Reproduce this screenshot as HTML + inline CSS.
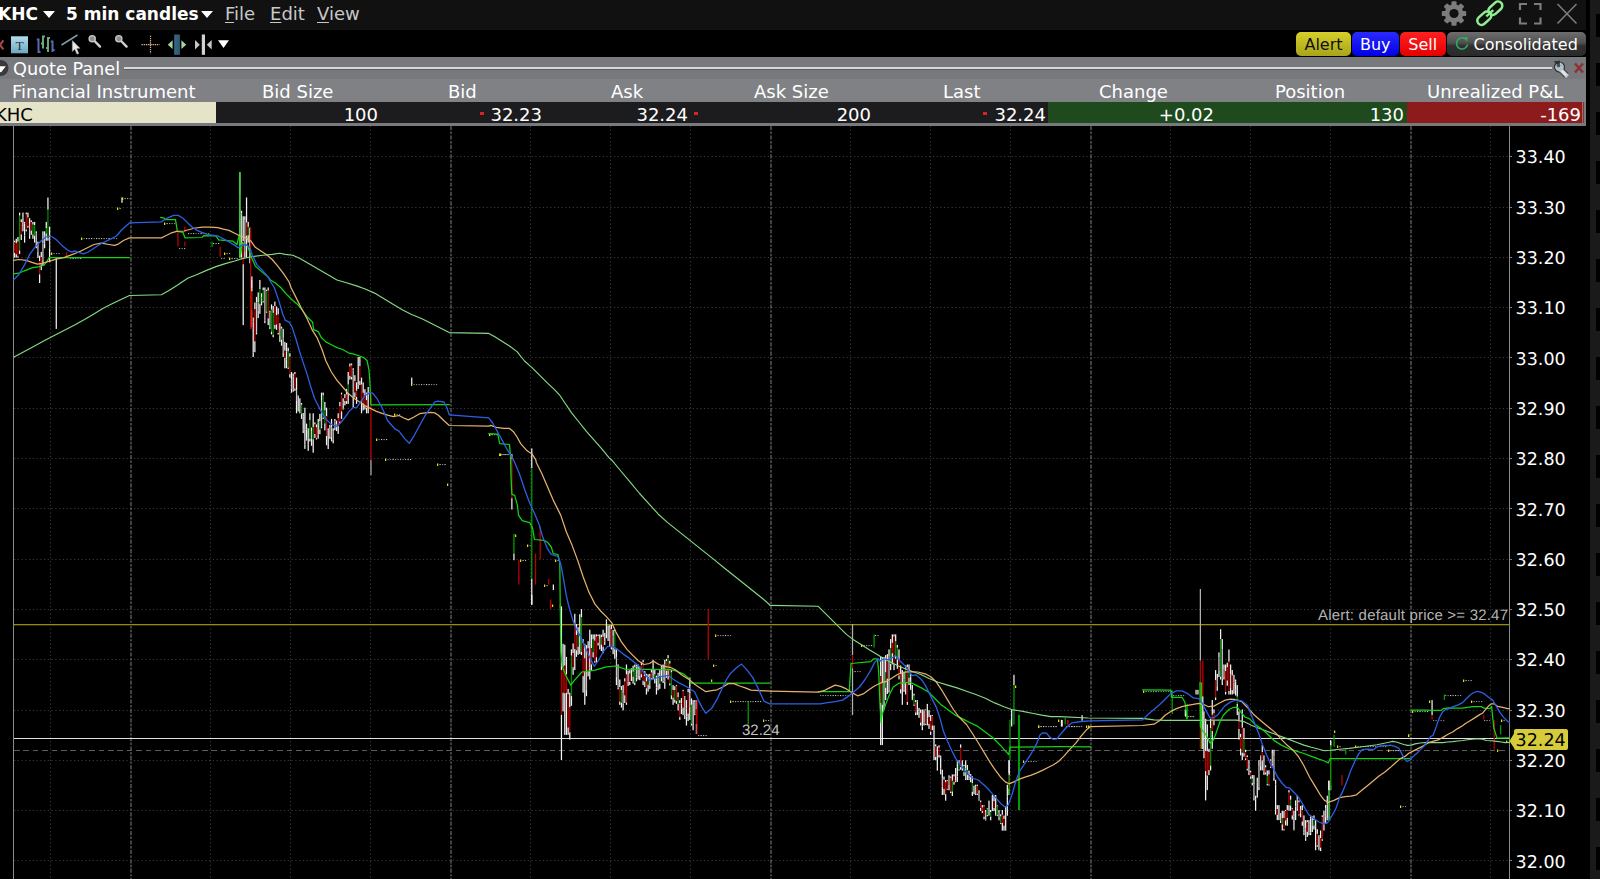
<!DOCTYPE html>
<html lang="en">
<head>
<meta charset="utf-8">
<title>KHC 5 min candles</title>
<style>
html,body{margin:0;padding:0;background:#000;}
body{width:1600px;height:879px;overflow:hidden;position:relative;font-family:"DejaVu Sans","Liberation Sans",sans-serif;color:#fff;}
.abs{position:absolute;}
#titlebar{left:0;top:0;width:1586px;height:30px;background:#111111;}
#toolbar{left:0;top:30px;width:1586px;height:27px;background:#000;}
#rightstrip{left:1590px;top:0;width:10px;height:879px;background:#1a1a1a;}
#rightstrip2{left:1596px;top:0;width:4px;height:879px;background:repeating-linear-gradient(to bottom,#1a1a1a 0,#1a1a1a 13.6px,#000 13.6px,#000 37.4px,#1a1a1a 37.4px,#1a1a1a 49px);}
.t1{font-weight:bold;font-size:17px;line-height:30px;top:-1px;white-space:nowrap;color:#fff;}
.menu{font-size:18px;line-height:30px;top:-1px;white-space:nowrap;color:#c8c8c8;}
.menu u{text-decoration-thickness:1px;text-underline-offset:2px;}
.tri{width:0;height:0;border-left:6px solid transparent;border-right:6px solid transparent;border-top:7px solid #fff;}
#qp{left:0;top:57px;width:1586px;height:22px;background:#77797d;}
#qh{left:0;top:79px;width:1586px;height:23px;background:#808185;}
#qr{left:0;top:102px;width:1586px;height:21px;background:#1c1c1e;}
#qb{left:0;top:123px;width:1586px;height:3px;background:#77797d;}
.ql{font-size:17.7px;line-height:22px;white-space:nowrap;color:#fff;}
.hd{font-size:18px;line-height:23px;top:80px;white-space:nowrap;color:#fff;}
.cell{font-size:18px;line-height:21px;top:104px;height:21px;white-space:nowrap;color:#fff;text-align:right;}
.btn{top:32px;height:23.5px;border-radius:5px;font-size:16px;line-height:25px;text-align:center;white-space:nowrap;}
.dot{width:4px;height:3px;background:#e02020;top:112px;}
.ax{font-size:17px;line-height:20px;left:1516px;color:#fff;white-space:nowrap;}
</style>
</head>
<body>
<div id="titlebar" class="abs"></div>
<div id="toolbar" class="abs"></div>
<div id="rightstrip" class="abs"></div>
<div id="rightstrip2" class="abs"></div>

<div class="abs t1" style="left:-2px;">KHC</div>
<div class="abs tri" style="left:43px;top:11px;"></div>
<div class="abs t1" style="left:66px;">5 min candles</div>
<div class="abs tri" style="left:201px;top:11px;"></div>
<div class="abs menu" style="left:225px;"><u>F</u>ile</div>
<div class="abs menu" style="left:270px;"><u>E</u>dit</div>
<div class="abs menu" style="left:317px;"><u>V</u>iew</div>


<div class="abs btn" style="left:1296px;width:55px;background:linear-gradient(#d6d02c,#a9a418);color:#111;">Alert</div>
<div class="abs btn" style="left:1352px;width:46.5px;background:linear-gradient(#2a2aff,#0000e6);color:#fff;">Buy</div>
<div class="abs btn" style="left:1399.5px;width:46.5px;background:linear-gradient(#ff2020,#e60000);color:#fff;">Sell</div>
<div class="abs btn" style="left:1446.5px;width:139.5px;background:linear-gradient(#6e6e6e 0%,#505050 45%,#303030 58%,#2a2a2a 100%);color:#fff;text-align:left;"><span style="margin-left:27px;">Consolidated</span></div>

<div id="qp" class="abs"></div>
<div id="qh" class="abs"></div>
<div id="qr" class="abs"></div>
<div id="qb" class="abs"></div>
<div class="abs" style="left:124px;top:67px;width:1428px;height:2px;background:#d8d8d8;border-bottom:1px solid #5c5d60;"></div>
<div class="abs ql" style="left:13px;top:58px;">Quote Panel</div>

<div class="abs hd" style="left:12px;">Financial Instrument</div>
<div class="abs hd" style="left:262px;">Bid Size</div>
<div class="abs hd" style="left:448px;">Bid</div>
<div class="abs hd" style="left:611px;">Ask</div>
<div class="abs hd" style="left:754px;">Ask Size</div>
<div class="abs hd" style="left:943px;">Last</div>
<div class="abs hd" style="left:1099px;">Change</div>
<div class="abs hd" style="left:1275px;">Position</div>
<div class="abs hd" style="left:1427px;">Unrealized P&amp;L</div>

<div class="abs" style="left:0;top:102px;width:216px;height:21px;background:#e6e4c8;"></div>
<div class="abs cell" style="left:-5px;color:#000;text-align:left;">KHC</div>
<div class="abs cell" style="left:216px;width:162px;">100</div>
<div class="abs cell" style="left:380px;width:162px;">32.23</div>
<div class="abs dot" style="left:480px;"></div>
<div class="abs cell" style="left:545px;width:143px;">32.24</div>
<div class="abs dot" style="left:694px;"></div>
<div class="abs cell" style="left:710px;width:161px;">200</div>
<div class="abs cell" style="left:880px;width:166px;">32.24</div>
<div class="abs dot" style="left:983px;"></div>
<div class="abs" style="left:1048px;top:102px;width:359px;height:21px;background:#1e4a1e;"></div>
<div class="abs cell" style="left:1048px;width:166px;">+0.02</div>
<div class="abs cell" style="left:1240px;width:164px;">130</div>
<div class="abs" style="left:1407px;top:102px;width:175px;height:21px;background:#8e1b1b;"></div><div class="abs" style="left:1582px;top:102px;width:4px;height:21px;background:#77797d;"></div><div class="abs" style="left:1583px;top:102px;width:1px;height:21px;background:#a02828;"></div>
<div class="abs cell" style="left:1407px;width:174px;">-169</div>

<svg class="abs" style="left:0;top:0;" width="1590" height="80" viewBox="0 0 1590 80">
<defs>
<linearGradient id="gT" x1="0" y1="0" x2="0" y2="1"><stop offset="0" stop-color="#b4dcea"/><stop offset="1" stop-color="#6aa9c2"/></linearGradient>
<linearGradient id="gB" x1="0" y1="0" x2="1" y2="0"><stop offset="0" stop-color="#386a88"/><stop offset="1" stop-color="#2a5570"/></linearGradient>
</defs>
<!-- red x fragment -->
<path d="M3.4 40.4 L0 44.8 L3.4 49.4" stroke="#a04848" stroke-width="2.2" fill="none"/>
<!-- T box -->
<rect x="11" y="36.3" width="17" height="17" fill="url(#gT)"/>
<text x="19.6" y="49.8" text-anchor="middle" font-family="Liberation Serif, serif" font-size="13.5" fill="#333">T</text>
<!-- bars -->
<g stroke-width="2" fill="none">
<path d="M38.5 38.5 V53 M36.8 39.5 H38.5 M38.5 52 H40.5" stroke="#5a68b0"/>
<path d="M43 35.5 V48.5 M43 36.5 H45 M41 43.5 H43" stroke="#6aa878"/>
<path d="M48 37 V52 M48 38 H50 M46 48 H48" stroke="#6aa878"/>
<path d="M52.5 40.5 V52 M50.7 41.5 H52.5 M52.5 50 H54.7" stroke="#5a68b0"/>
</g>
<!-- line + cursor -->
<path d="M61.5 45 L77.5 35" stroke="#7f98ab" stroke-width="1.5"/>
<path d="M72.3 40.5 L72.3 51.5 L74.8 49.3 L77 54.2 L78.8 53.4 L76.7 48.6 L80 48.3 Z" fill="#e8e8e8" stroke="#999" stroke-width="0.5"/>
<!-- magnifiers -->
<g>
<path d="M95 41.5 L100 46.6" stroke="#d0d0d0" stroke-width="2.4" stroke-linecap="round"/>
<circle cx="92.2" cy="38.8" r="3.1" fill="#8e8e8e" stroke="#c8c8c8" stroke-width="1.3"/>
<path d="M121.6 41.5 L126.6 46.6" stroke="#d0d0d0" stroke-width="2.4" stroke-linecap="round"/>
<circle cx="118.8" cy="38.8" r="3.1" fill="#8e8e8e" stroke="#c8c8c8" stroke-width="1.3"/>
</g>
<!-- crosshair -->
<path d="M141.5 44.7 H159.5 M150.5 35.7 V53.6" stroke="#d8b090" stroke-width="1.2" stroke-dasharray="1.4 0.8" fill="none"/>
<!-- blue bar with green arrows -->
<rect x="174.2" y="34.5" width="5.8" height="20.3" fill="url(#gB)"/>
<path d="M167.8 44.7 L172.6 40.3 V49.1 Z M186.2 44.7 L181.4 40.3 V49.1 Z" fill="#a4d4a4"/>
<!-- split -->
<rect x="201.8" y="34.5" width="3.2" height="20.3" fill="#d2d2d2"/>
<path d="M199.8 44.7 L195 40 V49.4 Z M206.8 44.7 L211.7 40 V49.4 Z" fill="#c8c8c8"/>
<path d="M218 40.2 H229 L223.5 48 Z" fill="#fff"/>
<!-- gear -->
<g transform="translate(1454 13.5)">
<g fill="#7c7c7c">
<circle r="9.3"/>
<rect x="-2.6" y="-12.2" width="5.2" height="24.4" rx="1.2"/>
<rect x="-2.6" y="-12.2" width="5.2" height="24.4" rx="1.2" transform="rotate(45)"/>
<rect x="-2.6" y="-12.2" width="5.2" height="24.4" rx="1.2" transform="rotate(90)"/>
<rect x="-2.6" y="-12.2" width="5.2" height="24.4" rx="1.2" transform="rotate(135)"/>
</g>
<circle r="4.6" fill="#111"/>
</g>
<!-- link -->
<g fill="none" stroke="#90ee90" stroke-width="2.7" transform="translate(1489.8 13.2) rotate(-42) scale(0.93)">
<rect x="-16.5" y="-4.6" width="17" height="9.2" rx="4.6"/>
<rect x="-0.5" y="-4.6" width="17" height="9.2" rx="4.6"/>
<path d="M-5 0 H5" stroke-width="2.6"/>
</g>
<!-- fullscreen -->
<path d="M1520 10 V4 H1527 M1534 4 H1540.5 V10 M1540.5 17.5 V23.5 H1534 M1527 23.5 H1520 V17.5" stroke="#7c7c7c" stroke-width="2.2" fill="none"/>
<!-- close -->
<path d="M1557.5 4 L1576.5 23.5 M1576.5 4 L1557.5 23.5" stroke="#7c7c7c" stroke-width="1.6" fill="none"/>
<!-- refresh icon in Consolidated -->
<path d="M1466.5 40 A5.6 5.6 0 1 0 1467.6 44.5" stroke="#2fae62" stroke-width="1.5" fill="none"/>
<path d="M1463.2 37.2 L1467.8 37.2 L1467.2 41.8 Z" fill="#2fae62"/>
<!-- quote panel collapse icon -->
<circle cx="0.5" cy="68" r="8" fill="#3a3a3c"/>
<path d="M-4 66.2 H5.8 L1 72.6 Z" fill="#fff"/>
<!-- quote panel right icons -->
<g>
<path d="M1560 69 L1566.5 75.5" stroke="#2e3236" stroke-width="6" stroke-linecap="butt"/>
<circle cx="1559.5" cy="67" r="5.6" fill="#2e3236"/>
<path d="M1560 69 L1567.5 76.5" stroke="#c6d0d8" stroke-width="4" stroke-linecap="butt"/>
<circle cx="1559.5" cy="67" r="4.4" fill="#b4c0c8"/>
<path d="M1559.5 67 L1553.5 61.5 L1560 60.5 Z" fill="#2e3236"/>
<circle cx="1558.5" cy="65.6" r="1.8" fill="#4a5258"/>
<path d="M1561.5 70.5 L1566 75" stroke="#e6eef2" stroke-width="1.5"/>
</g>
<path d="M1575 63.5 L1583 72.5 M1583 63.5 L1575 72.5" stroke="#8c3232" stroke-width="2.6" fill="none"/>
</svg>

<svg class="abs" style="left:0;top:126px;" width="1590" height="753" viewBox="0 126 1590 753" shape-rendering="crispEdges">
<rect x="0" y="126" width="1590" height="753" fill="#000"/>
<line x1="14" x2="1509" y1="860.5" y2="860.5" stroke="#363636" stroke-width="1" stroke-dasharray="1.25 2.5" shape-rendering="auto"/>
<line x1="1510" x2="1512" y1="860.5" y2="860.5" stroke="#7a7a7a" stroke-width="1"/>
<line x1="14" x2="1509" y1="810.5" y2="810.5" stroke="#363636" stroke-width="1" stroke-dasharray="1.25 2.5" shape-rendering="auto"/>
<line x1="1510" x2="1512" y1="810.5" y2="810.5" stroke="#7a7a7a" stroke-width="1"/>
<line x1="14" x2="1509" y1="760.5" y2="760.5" stroke="#363636" stroke-width="1" stroke-dasharray="1.25 2.5" shape-rendering="auto"/>
<line x1="1510" x2="1512" y1="760.5" y2="760.5" stroke="#7a7a7a" stroke-width="1"/>
<line x1="14" x2="1509" y1="710.5" y2="710.5" stroke="#363636" stroke-width="1" stroke-dasharray="1.25 2.5" shape-rendering="auto"/>
<line x1="1510" x2="1512" y1="710.5" y2="710.5" stroke="#7a7a7a" stroke-width="1"/>
<line x1="14" x2="1509" y1="659.5" y2="659.5" stroke="#363636" stroke-width="1" stroke-dasharray="1.25 2.5" shape-rendering="auto"/>
<line x1="1510" x2="1512" y1="659.5" y2="659.5" stroke="#7a7a7a" stroke-width="1"/>
<line x1="14" x2="1509" y1="609.5" y2="609.5" stroke="#363636" stroke-width="1" stroke-dasharray="1.25 2.5" shape-rendering="auto"/>
<line x1="1510" x2="1512" y1="609.5" y2="609.5" stroke="#7a7a7a" stroke-width="1"/>
<line x1="14" x2="1509" y1="559.5" y2="559.5" stroke="#363636" stroke-width="1" stroke-dasharray="1.25 2.5" shape-rendering="auto"/>
<line x1="1510" x2="1512" y1="559.5" y2="559.5" stroke="#7a7a7a" stroke-width="1"/>
<line x1="14" x2="1509" y1="508.5" y2="508.5" stroke="#363636" stroke-width="1" stroke-dasharray="1.25 2.5" shape-rendering="auto"/>
<line x1="1510" x2="1512" y1="508.5" y2="508.5" stroke="#7a7a7a" stroke-width="1"/>
<line x1="14" x2="1509" y1="458.5" y2="458.5" stroke="#363636" stroke-width="1" stroke-dasharray="1.25 2.5" shape-rendering="auto"/>
<line x1="1510" x2="1512" y1="458.5" y2="458.5" stroke="#7a7a7a" stroke-width="1"/>
<line x1="14" x2="1509" y1="408.5" y2="408.5" stroke="#363636" stroke-width="1" stroke-dasharray="1.25 2.5" shape-rendering="auto"/>
<line x1="1510" x2="1512" y1="408.5" y2="408.5" stroke="#7a7a7a" stroke-width="1"/>
<line x1="14" x2="1509" y1="357.5" y2="357.5" stroke="#363636" stroke-width="1" stroke-dasharray="1.25 2.5" shape-rendering="auto"/>
<line x1="1510" x2="1512" y1="357.5" y2="357.5" stroke="#7a7a7a" stroke-width="1"/>
<line x1="14" x2="1509" y1="307.5" y2="307.5" stroke="#363636" stroke-width="1" stroke-dasharray="1.25 2.5" shape-rendering="auto"/>
<line x1="1510" x2="1512" y1="307.5" y2="307.5" stroke="#7a7a7a" stroke-width="1"/>
<line x1="14" x2="1509" y1="257.5" y2="257.5" stroke="#363636" stroke-width="1" stroke-dasharray="1.25 2.5" shape-rendering="auto"/>
<line x1="1510" x2="1512" y1="257.5" y2="257.5" stroke="#7a7a7a" stroke-width="1"/>
<line x1="14" x2="1509" y1="207.5" y2="207.5" stroke="#363636" stroke-width="1" stroke-dasharray="1.25 2.5" shape-rendering="auto"/>
<line x1="1510" x2="1512" y1="207.5" y2="207.5" stroke="#7a7a7a" stroke-width="1"/>
<line x1="14" x2="1509" y1="156.5" y2="156.5" stroke="#363636" stroke-width="1" stroke-dasharray="1.25 2.5" shape-rendering="auto"/>
<line x1="1510" x2="1512" y1="156.5" y2="156.5" stroke="#7a7a7a" stroke-width="1"/>
<line x1="50.5" x2="50.5" y1="126" y2="879" stroke="#363636" stroke-width="1" stroke-dasharray="1.25 2.5" shape-rendering="auto"/>
<line x1="131" x2="131" y1="126" y2="879" stroke="#5c5c5c" stroke-width="1.4" stroke-dasharray="4.2 1.4 2.4 1.4" shape-rendering="auto"/>
<line x1="210.5" x2="210.5" y1="126" y2="879" stroke="#363636" stroke-width="1" stroke-dasharray="1.25 2.5" shape-rendering="auto"/>
<line x1="290.5" x2="290.5" y1="126" y2="879" stroke="#363636" stroke-width="1" stroke-dasharray="1.25 2.5" shape-rendering="auto"/>
<line x1="370.5" x2="370.5" y1="126" y2="879" stroke="#363636" stroke-width="1" stroke-dasharray="1.25 2.5" shape-rendering="auto"/>
<line x1="451" x2="451" y1="126" y2="879" stroke="#5c5c5c" stroke-width="1.4" stroke-dasharray="4.2 1.4 2.4 1.4" shape-rendering="auto"/>
<line x1="530.5" x2="530.5" y1="126" y2="879" stroke="#363636" stroke-width="1" stroke-dasharray="1.25 2.5" shape-rendering="auto"/>
<line x1="610.5" x2="610.5" y1="126" y2="879" stroke="#363636" stroke-width="1" stroke-dasharray="1.25 2.5" shape-rendering="auto"/>
<line x1="690.5" x2="690.5" y1="126" y2="879" stroke="#363636" stroke-width="1" stroke-dasharray="1.25 2.5" shape-rendering="auto"/>
<line x1="771" x2="771" y1="126" y2="879" stroke="#5c5c5c" stroke-width="1.4" stroke-dasharray="4.2 1.4 2.4 1.4" shape-rendering="auto"/>
<line x1="850.5" x2="850.5" y1="126" y2="879" stroke="#363636" stroke-width="1" stroke-dasharray="1.25 2.5" shape-rendering="auto"/>
<line x1="930.5" x2="930.5" y1="126" y2="879" stroke="#363636" stroke-width="1" stroke-dasharray="1.25 2.5" shape-rendering="auto"/>
<line x1="1010.5" x2="1010.5" y1="126" y2="879" stroke="#363636" stroke-width="1" stroke-dasharray="1.25 2.5" shape-rendering="auto"/>
<line x1="1091" x2="1091" y1="126" y2="879" stroke="#5c5c5c" stroke-width="1.4" stroke-dasharray="4.2 1.4 2.4 1.4" shape-rendering="auto"/>
<line x1="1170.5" x2="1170.5" y1="126" y2="879" stroke="#363636" stroke-width="1" stroke-dasharray="1.25 2.5" shape-rendering="auto"/>
<line x1="1250.5" x2="1250.5" y1="126" y2="879" stroke="#363636" stroke-width="1" stroke-dasharray="1.25 2.5" shape-rendering="auto"/>
<line x1="1330.5" x2="1330.5" y1="126" y2="879" stroke="#363636" stroke-width="1" stroke-dasharray="1.25 2.5" shape-rendering="auto"/>
<line x1="1411" x2="1411" y1="126" y2="879" stroke="#5c5c5c" stroke-width="1.4" stroke-dasharray="4.2 1.4 2.4 1.4" shape-rendering="auto"/>
<line x1="1490.5" x2="1490.5" y1="126" y2="879" stroke="#363636" stroke-width="1" stroke-dasharray="1.25 2.5" shape-rendering="auto"/>
<line x1="13.5" x2="13.5" y1="126" y2="879" stroke="#8a8a8a" stroke-width="1"/>
<line x1="1509.5" x2="1509.5" y1="126" y2="879" stroke="#8a8a8a" stroke-width="1"/>
<line x1="14" x2="1509" y1="624.5" y2="624.5" stroke="#948c0a" stroke-width="1"/>
<line x1="14" x2="1509" y1="625.5" y2="625.5" stroke="#2c2a00" stroke-width="1"/>
<line x1="14" x2="1509" y1="738.5" y2="738.5" stroke="#e0e0e0" stroke-width="1"/>
<line x1="14" x2="1509" y1="750.5" y2="750.5" stroke="#5c5c5c" stroke-width="1" stroke-dasharray="5.6 3.8"/>
<g shape-rendering="auto">
<rect x="13.98" y="240.7" width="1.25" height="1.7" fill="#f2f2f2"/>
<rect x="13.98" y="242.5" width="1.25" height="10.5" fill="#b40000"/>
<rect x="13.98" y="252.9" width="1.25" height="4.7" fill="#f2f2f2"/>
<rect x="15.65" y="238.8" width="1.25" height="4.5" fill="#f2f2f2"/>
<rect x="15.65" y="243.3" width="1.25" height="11.0" fill="#b40000"/>
<rect x="15.65" y="254.3" width="1.25" height="3.3" fill="#f2f2f2"/>
<rect x="17.31" y="237.0" width="1.25" height="4.7" fill="#f2f2f2"/>
<rect x="17.31" y="241.7" width="1.25" height="14.6" fill="#b40000"/>
<rect x="17.31" y="256.3" width="1.25" height="1.3" fill="#f2f2f2"/>
<rect x="18.98" y="212.6" width="1.25" height="3.1" fill="#f2f2f2"/>
<rect x="18.98" y="215.6" width="1.25" height="34.8" fill="#008c00"/>
<rect x="18.98" y="250.5" width="1.25" height="3.4" fill="#f2f2f2"/>
<rect x="20.65" y="219.3" width="1.25" height="2.7" fill="#f2f2f2"/>
<rect x="20.65" y="221.9" width="1.25" height="12.5" fill="#b40000"/>
<rect x="20.65" y="234.4" width="1.25" height="5.6" fill="#f2f2f2"/>
<rect x="22.31" y="212.6" width="1.25" height="4.7" fill="#f2f2f2"/>
<rect x="22.31" y="217.3" width="1.25" height="10.5" fill="#f2f2f2"/>
<rect x="22.31" y="227.8" width="1.25" height="3.5" fill="#f2f2f2"/>
<rect x="23.98" y="221.9" width="1.25" height="1.4" fill="#f2f2f2"/>
<rect x="23.98" y="223.3" width="1.25" height="12.0" fill="#f2f2f2"/>
<rect x="23.98" y="235.4" width="1.25" height="7.2" fill="#f2f2f2"/>
<rect x="25.65" y="212.6" width="1.25" height="1.9" fill="#f2f2f2"/>
<rect x="25.65" y="214.4" width="1.25" height="15.2" fill="#b40000"/>
<rect x="25.65" y="229.6" width="1.25" height="1.7" fill="#f2f2f2"/>
<rect x="27.31" y="212.6" width="1.25" height="5.0" fill="#f2f2f2"/>
<rect x="27.31" y="217.6" width="1.25" height="8.3" fill="#b40000"/>
<rect x="27.31" y="225.9" width="1.25" height="1.7" fill="#f2f2f2"/>
<rect x="28.98" y="218.2" width="1.25" height="5.7" fill="#f2f2f2"/>
<rect x="28.98" y="223.8" width="1.25" height="11.3" fill="#cfc8c8"/>
<rect x="28.98" y="235.1" width="1.25" height="3.7" fill="#f2f2f2"/>
<rect x="30.65" y="220.3" width="1.25" height="1.8" fill="#f2f2f2"/>
<rect x="30.65" y="222.0" width="1.25" height="8.5" fill="#b40000"/>
<rect x="30.65" y="230.6" width="1.25" height="4.2" fill="#f2f2f2"/>
<rect x="32.31" y="221.9" width="1.25" height="2.7" fill="#f2f2f2"/>
<rect x="32.31" y="224.7" width="1.25" height="9.9" fill="#008c00"/>
<rect x="32.31" y="234.5" width="1.25" height="4.3" fill="#f2f2f2"/>
<rect x="33.98" y="221.9" width="1.25" height="3.2" fill="#f2f2f2"/>
<rect x="33.98" y="225.1" width="1.25" height="10.7" fill="#008c00"/>
<rect x="33.98" y="235.8" width="1.25" height="6.8" fill="#f2f2f2"/>
<rect x="35.65" y="231.3" width="1.25" height="2.3" fill="#f2f2f2"/>
<rect x="35.65" y="233.6" width="1.25" height="10.4" fill="#cfc8c8"/>
<rect x="35.65" y="244.0" width="1.25" height="4.2" fill="#f2f2f2"/>
<rect x="37.31" y="241.6" width="1.25" height="2.5" fill="#f2f2f2"/>
<rect x="37.31" y="244.0" width="1.25" height="7.4" fill="#cfc8c8"/>
<rect x="37.31" y="251.5" width="1.25" height="6.4" fill="#f2f2f2"/>
<rect x="38.98" y="255.7" width="1.25" height="5.3" fill="#f2f2f2"/>
<rect x="38.98" y="261.1" width="1.25" height="13.3" fill="#b40000"/>
<rect x="38.98" y="274.4" width="1.25" height="8.6" fill="#f2f2f2"/>
<rect x="40.65" y="251.9" width="1.25" height="5.2" fill="#f2f2f2"/>
<rect x="40.65" y="257.1" width="1.25" height="7.2" fill="#b40000"/>
<rect x="40.65" y="264.3" width="1.25" height="5.8" fill="#f2f2f2"/>
<rect x="42.31" y="231.3" width="1.25" height="12.0" fill="#f2f2f2"/>
<rect x="42.31" y="243.4" width="1.25" height="16.3" fill="#cfc8c8"/>
<rect x="42.31" y="259.7" width="1.25" height="5.4" fill="#f2f2f2"/>
<rect x="43.98" y="231.3" width="1.25" height="4.4" fill="#f2f2f2"/>
<rect x="43.98" y="235.7" width="1.25" height="8.3" fill="#cfc8c8"/>
<rect x="43.98" y="244.0" width="1.25" height="4.3" fill="#f2f2f2"/>
<rect x="45.65" y="221.9" width="1.25" height="6.5" fill="#f2f2f2"/>
<rect x="45.65" y="228.4" width="1.25" height="5.2" fill="#008c00"/>
<rect x="45.65" y="233.6" width="1.25" height="7.1" fill="#f2f2f2"/>
<rect x="47.31" y="197.5" width="1.25" height="12.2" fill="#f2f2f2"/>
<rect x="47.31" y="209.7" width="1.25" height="27.9" fill="#008c00"/>
<rect x="47.31" y="237.6" width="1.25" height="3.1" fill="#f2f2f2"/>
<rect x="48.98" y="226.6" width="1.25" height="9.9" fill="#f2f2f2"/>
<rect x="48.98" y="236.5" width="1.25" height="11.6" fill="#cfc8c8"/>
<rect x="48.98" y="248.1" width="1.25" height="14.2" fill="#f2f2f2"/>
<rect x="239.25" y="172.2" width="1.25" height="23.2" fill="#f2f2f2"/>
<rect x="239.25" y="195.4" width="1.25" height="23.7" fill="#cfc8c8"/>
<rect x="239.25" y="219.0" width="1.25" height="38.6" fill="#f2f2f2"/>
<rect x="240.91" y="210.7" width="1.25" height="2.7" fill="#f2f2f2"/>
<rect x="240.91" y="213.4" width="1.25" height="34.3" fill="#cfc8c8"/>
<rect x="240.91" y="247.7" width="1.25" height="9.9" fill="#f2f2f2"/>
<rect x="242.58" y="216.3" width="1.25" height="24.9" fill="#f2f2f2"/>
<rect x="242.58" y="241.2" width="1.25" height="23.0" fill="#b40000"/>
<rect x="242.58" y="264.3" width="1.25" height="60.8" fill="#f2f2f2"/>
<rect x="244.25" y="216.3" width="1.25" height="3.9" fill="#f2f2f2"/>
<rect x="244.25" y="220.3" width="1.25" height="31.7" fill="#cfc8c8"/>
<rect x="244.25" y="252.0" width="1.25" height="5.6" fill="#f2f2f2"/>
<rect x="245.91" y="197.5" width="1.25" height="25.1" fill="#f2f2f2"/>
<rect x="245.91" y="222.6" width="1.25" height="13.0" fill="#b40000"/>
<rect x="245.91" y="235.6" width="1.25" height="22.0" fill="#f2f2f2"/>
<rect x="247.58" y="221.9" width="1.25" height="5.0" fill="#f2f2f2"/>
<rect x="247.58" y="227.0" width="1.25" height="8.2" fill="#008c00"/>
<rect x="247.58" y="235.2" width="1.25" height="7.4" fill="#f2f2f2"/>
<rect x="249.25" y="227.6" width="1.25" height="12.6" fill="#f2f2f2"/>
<rect x="249.25" y="240.1" width="1.25" height="17.8" fill="#f2f2f2"/>
<rect x="249.25" y="258.0" width="1.25" height="5.3" fill="#f2f2f2"/>
<rect x="250.91" y="280.0" width="1.25" height="8.2" fill="#f2f2f2"/>
<rect x="250.91" y="288.2" width="1.25" height="21.8" fill="#008c00"/>
<rect x="250.91" y="310.1" width="1.25" height="16.9" fill="#f2f2f2"/>
<rect x="252.58" y="317.5" width="1.25" height="4.1" fill="#f2f2f2"/>
<rect x="252.58" y="321.6" width="1.25" height="31.0" fill="#f2f2f2"/>
<rect x="252.58" y="352.6" width="1.25" height="4.4" fill="#f2f2f2"/>
<rect x="254.25" y="302.5" width="1.25" height="6.6" fill="#f2f2f2"/>
<rect x="254.25" y="309.1" width="1.25" height="32.3" fill="#b40000"/>
<rect x="254.25" y="341.3" width="1.25" height="10.9" fill="#f2f2f2"/>
<rect x="255.91" y="296.9" width="1.25" height="5.3" fill="#f2f2f2"/>
<rect x="255.91" y="302.2" width="1.25" height="30.3" fill="#cfc8c8"/>
<rect x="255.91" y="332.5" width="1.25" height="1.9" fill="#f2f2f2"/>
<rect x="257.58" y="292.4" width="1.25" height="9.8" fill="#f2f2f2"/>
<rect x="257.58" y="302.3" width="1.25" height="8.3" fill="#cfc8c8"/>
<rect x="257.58" y="310.6" width="1.25" height="7.5" fill="#f2f2f2"/>
<rect x="259.25" y="280.0" width="1.25" height="9.0" fill="#f2f2f2"/>
<rect x="259.25" y="289.0" width="1.25" height="15.1" fill="#008c00"/>
<rect x="259.25" y="304.1" width="1.25" height="9.7" fill="#f2f2f2"/>
<rect x="260.91" y="293.2" width="1.25" height="4.3" fill="#f2f2f2"/>
<rect x="260.91" y="297.5" width="1.25" height="3.8" fill="#cfc8c8"/>
<rect x="260.91" y="301.4" width="1.25" height="4.0" fill="#f2f2f2"/>
<rect x="262.58" y="287.5" width="1.25" height="2.8" fill="#f2f2f2"/>
<rect x="262.58" y="290.4" width="1.25" height="10.9" fill="#008c00"/>
<rect x="262.58" y="301.2" width="1.25" height="1.3" fill="#f2f2f2"/>
<rect x="264.25" y="287.5" width="1.25" height="2.6" fill="#f2f2f2"/>
<rect x="264.25" y="290.1" width="1.25" height="30.5" fill="#cfc8c8"/>
<rect x="264.25" y="320.6" width="1.25" height="2.6" fill="#f2f2f2"/>
<rect x="265.91" y="289.7" width="1.25" height="1.6" fill="#f2f2f2"/>
<rect x="265.91" y="291.3" width="1.25" height="20.4" fill="#008c00"/>
<rect x="265.91" y="311.6" width="1.25" height="1.2" fill="#f2f2f2"/>
<rect x="267.58" y="287.5" width="1.25" height="3.2" fill="#f2f2f2"/>
<rect x="267.58" y="290.7" width="1.25" height="27.7" fill="#b40000"/>
<rect x="267.58" y="318.4" width="1.25" height="6.7" fill="#f2f2f2"/>
<rect x="269.25" y="310.7" width="1.25" height="1.9" fill="#f2f2f2"/>
<rect x="269.25" y="312.6" width="1.25" height="14.0" fill="#cfc8c8"/>
<rect x="269.25" y="326.6" width="1.25" height="2.5" fill="#f2f2f2"/>
<rect x="270.91" y="304.4" width="1.25" height="5.3" fill="#f2f2f2"/>
<rect x="270.91" y="309.7" width="1.25" height="21.9" fill="#008c00"/>
<rect x="270.91" y="331.6" width="1.25" height="2.8" fill="#f2f2f2"/>
<rect x="272.58" y="306.0" width="1.25" height="6.9" fill="#f2f2f2"/>
<rect x="272.58" y="312.9" width="1.25" height="21.9" fill="#008c00"/>
<rect x="272.58" y="334.8" width="1.25" height="2.5" fill="#f2f2f2"/>
<rect x="274.25" y="301.6" width="1.25" height="4.6" fill="#f2f2f2"/>
<rect x="274.25" y="306.2" width="1.25" height="18.7" fill="#b40000"/>
<rect x="274.25" y="324.9" width="1.25" height="3.9" fill="#f2f2f2"/>
<rect x="275.91" y="306.4" width="1.25" height="9.0" fill="#f2f2f2"/>
<rect x="275.91" y="315.4" width="1.25" height="9.0" fill="#b40000"/>
<rect x="275.91" y="324.4" width="1.25" height="5.5" fill="#f2f2f2"/>
<rect x="277.58" y="308.2" width="1.25" height="6.3" fill="#f2f2f2"/>
<rect x="277.58" y="314.5" width="1.25" height="18.4" fill="#b40000"/>
<rect x="277.58" y="332.9" width="1.25" height="1.6" fill="#f2f2f2"/>
<rect x="279.25" y="323.2" width="1.25" height="7.4" fill="#f2f2f2"/>
<rect x="279.25" y="330.5" width="1.25" height="4.8" fill="#cfc8c8"/>
<rect x="279.25" y="335.3" width="1.25" height="6.6" fill="#f2f2f2"/>
<rect x="280.91" y="326.7" width="1.25" height="2.1" fill="#f2f2f2"/>
<rect x="280.91" y="328.7" width="1.25" height="10.8" fill="#008c00"/>
<rect x="280.91" y="339.6" width="1.25" height="6.1" fill="#f2f2f2"/>
<rect x="282.58" y="328.8" width="1.25" height="9.1" fill="#f2f2f2"/>
<rect x="282.58" y="337.9" width="1.25" height="14.4" fill="#cfc8c8"/>
<rect x="282.58" y="352.3" width="1.25" height="4.7" fill="#f2f2f2"/>
<rect x="284.25" y="341.9" width="1.25" height="8.8" fill="#f2f2f2"/>
<rect x="284.25" y="350.7" width="1.25" height="7.1" fill="#b40000"/>
<rect x="284.25" y="357.9" width="1.25" height="10.4" fill="#f2f2f2"/>
<rect x="285.91" y="342.9" width="1.25" height="8.4" fill="#f2f2f2"/>
<rect x="285.91" y="351.3" width="1.25" height="8.4" fill="#f2f2f2"/>
<rect x="285.91" y="359.7" width="1.25" height="8.5" fill="#f2f2f2"/>
<rect x="287.58" y="347.8" width="1.25" height="3.7" fill="#f2f2f2"/>
<rect x="287.58" y="351.5" width="1.25" height="16.2" fill="#008c00"/>
<rect x="287.58" y="367.6" width="1.25" height="1.3" fill="#f2f2f2"/>
<rect x="289.25" y="353.2" width="1.25" height="3.6" fill="#f2f2f2"/>
<rect x="289.25" y="356.8" width="1.25" height="17.4" fill="#b40000"/>
<rect x="289.25" y="374.2" width="1.25" height="3.4" fill="#f2f2f2"/>
<rect x="290.91" y="372.0" width="1.25" height="7.9" fill="#f2f2f2"/>
<rect x="290.91" y="379.9" width="1.25" height="8.4" fill="#cfc8c8"/>
<rect x="290.91" y="388.4" width="1.25" height="4.3" fill="#f2f2f2"/>
<rect x="292.58" y="373.5" width="1.25" height="3.2" fill="#f2f2f2"/>
<rect x="292.58" y="376.7" width="1.25" height="12.7" fill="#f2f2f2"/>
<rect x="292.58" y="389.4" width="1.25" height="2.3" fill="#f2f2f2"/>
<rect x="294.25" y="372.0" width="1.25" height="2.2" fill="#f2f2f2"/>
<rect x="294.25" y="374.2" width="1.25" height="14.3" fill="#b40000"/>
<rect x="294.25" y="388.5" width="1.25" height="2.3" fill="#f2f2f2"/>
<rect x="295.91" y="377.6" width="1.25" height="13.0" fill="#f2f2f2"/>
<rect x="295.91" y="390.6" width="1.25" height="10.4" fill="#cfc8c8"/>
<rect x="295.91" y="401.0" width="1.25" height="12.3" fill="#f2f2f2"/>
<rect x="297.58" y="395.5" width="1.25" height="1.3" fill="#f2f2f2"/>
<rect x="297.58" y="396.7" width="1.25" height="10.2" fill="#f2f2f2"/>
<rect x="297.58" y="406.9" width="1.25" height="4.5" fill="#f2f2f2"/>
<rect x="299.25" y="398.3" width="1.25" height="4.9" fill="#f2f2f2"/>
<rect x="299.25" y="403.1" width="1.25" height="5.5" fill="#f2f2f2"/>
<rect x="299.25" y="408.6" width="1.25" height="4.7" fill="#f2f2f2"/>
<rect x="300.91" y="403.0" width="1.25" height="1.8" fill="#f2f2f2"/>
<rect x="300.91" y="404.8" width="1.25" height="9.0" fill="#008c00"/>
<rect x="300.91" y="413.7" width="1.25" height="5.2" fill="#f2f2f2"/>
<rect x="302.58" y="413.0" width="1.25" height="3.8" fill="#f2f2f2"/>
<rect x="302.58" y="416.8" width="1.25" height="12.5" fill="#f2f2f2"/>
<rect x="302.58" y="429.3" width="1.25" height="3.8" fill="#f2f2f2"/>
<rect x="304.25" y="407.7" width="1.25" height="12.5" fill="#f2f2f2"/>
<rect x="304.25" y="420.2" width="1.25" height="24.2" fill="#f2f2f2"/>
<rect x="304.25" y="444.4" width="1.25" height="4.5" fill="#f2f2f2"/>
<rect x="305.91" y="423.6" width="1.25" height="5.7" fill="#f2f2f2"/>
<rect x="305.91" y="429.3" width="1.25" height="9.6" fill="#f2f2f2"/>
<rect x="305.91" y="438.9" width="1.25" height="1.7" fill="#f2f2f2"/>
<rect x="307.58" y="428.3" width="1.25" height="8.9" fill="#f2f2f2"/>
<rect x="307.58" y="437.2" width="1.25" height="7.4" fill="#f2f2f2"/>
<rect x="307.58" y="444.5" width="1.25" height="6.3" fill="#f2f2f2"/>
<rect x="309.25" y="413.3" width="1.25" height="6.8" fill="#f2f2f2"/>
<rect x="309.25" y="420.1" width="1.25" height="18.6" fill="#008c00"/>
<rect x="309.25" y="438.7" width="1.25" height="2.7" fill="#f2f2f2"/>
<rect x="310.91" y="427.5" width="1.25" height="4.3" fill="#f2f2f2"/>
<rect x="310.91" y="431.8" width="1.25" height="7.1" fill="#cfc8c8"/>
<rect x="310.91" y="438.9" width="1.25" height="6.9" fill="#f2f2f2"/>
<rect x="312.58" y="413.3" width="1.25" height="14.0" fill="#f2f2f2"/>
<rect x="312.58" y="427.3" width="1.25" height="12.1" fill="#008c00"/>
<rect x="312.58" y="439.3" width="1.25" height="13.4" fill="#f2f2f2"/>
<rect x="314.25" y="422.4" width="1.25" height="2.1" fill="#f2f2f2"/>
<rect x="314.25" y="424.5" width="1.25" height="9.5" fill="#b40000"/>
<rect x="314.25" y="434.0" width="1.25" height="4.0" fill="#f2f2f2"/>
<rect x="315.91" y="424.5" width="1.25" height="3.0" fill="#f2f2f2"/>
<rect x="315.91" y="427.5" width="1.25" height="10.6" fill="#b40000"/>
<rect x="315.91" y="438.1" width="1.25" height="1.4" fill="#f2f2f2"/>
<rect x="317.58" y="418.9" width="1.25" height="3.4" fill="#f2f2f2"/>
<rect x="317.58" y="422.3" width="1.25" height="12.1" fill="#f2f2f2"/>
<rect x="317.58" y="434.5" width="1.25" height="4.1" fill="#f2f2f2"/>
<rect x="319.25" y="413.9" width="1.25" height="7.5" fill="#f2f2f2"/>
<rect x="319.25" y="421.4" width="1.25" height="8.2" fill="#008c00"/>
<rect x="319.25" y="429.6" width="1.25" height="4.6" fill="#f2f2f2"/>
<rect x="320.92" y="392.6" width="1.25" height="8.3" fill="#f2f2f2"/>
<rect x="320.92" y="401.0" width="1.25" height="25.3" fill="#cfc8c8"/>
<rect x="320.92" y="426.3" width="1.25" height="2.0" fill="#f2f2f2"/>
<rect x="322.58" y="392.6" width="1.25" height="3.0" fill="#f2f2f2"/>
<rect x="322.58" y="395.6" width="1.25" height="21.9" fill="#008c00"/>
<rect x="322.58" y="417.6" width="1.25" height="1.4" fill="#f2f2f2"/>
<rect x="324.25" y="401.9" width="1.25" height="8.6" fill="#f2f2f2"/>
<rect x="324.25" y="410.6" width="1.25" height="12.8" fill="#008c00"/>
<rect x="324.25" y="423.4" width="1.25" height="7.0" fill="#f2f2f2"/>
<rect x="325.92" y="407.7" width="1.25" height="8.7" fill="#f2f2f2"/>
<rect x="325.92" y="416.3" width="1.25" height="19.7" fill="#b40000"/>
<rect x="325.92" y="436.0" width="1.25" height="9.2" fill="#f2f2f2"/>
<rect x="327.58" y="428.3" width="1.25" height="1.8" fill="#f2f2f2"/>
<rect x="327.58" y="430.1" width="1.25" height="13.8" fill="#f2f2f2"/>
<rect x="327.58" y="443.9" width="1.25" height="5.1" fill="#f2f2f2"/>
<rect x="329.25" y="424.8" width="1.25" height="3.2" fill="#f2f2f2"/>
<rect x="329.25" y="428.0" width="1.25" height="7.4" fill="#cfc8c8"/>
<rect x="329.25" y="435.4" width="1.25" height="3.5" fill="#f2f2f2"/>
<rect x="330.92" y="418.9" width="1.25" height="8.3" fill="#f2f2f2"/>
<rect x="330.92" y="427.2" width="1.25" height="9.6" fill="#cfc8c8"/>
<rect x="330.92" y="436.8" width="1.25" height="4.6" fill="#f2f2f2"/>
<rect x="332.58" y="428.3" width="1.25" height="3.4" fill="#f2f2f2"/>
<rect x="332.58" y="431.7" width="1.25" height="8.2" fill="#cfc8c8"/>
<rect x="332.58" y="439.9" width="1.25" height="3.4" fill="#f2f2f2"/>
<rect x="334.25" y="418.9" width="1.25" height="2.3" fill="#f2f2f2"/>
<rect x="334.25" y="421.3" width="1.25" height="6.3" fill="#cfc8c8"/>
<rect x="334.25" y="427.5" width="1.25" height="2.7" fill="#f2f2f2"/>
<rect x="335.92" y="420.6" width="1.25" height="3.7" fill="#f2f2f2"/>
<rect x="335.92" y="424.4" width="1.25" height="2.8" fill="#cfc8c8"/>
<rect x="335.92" y="427.1" width="1.25" height="4.0" fill="#f2f2f2"/>
<rect x="337.58" y="413.3" width="1.25" height="5.1" fill="#f2f2f2"/>
<rect x="337.58" y="418.4" width="1.25" height="7.7" fill="#b40000"/>
<rect x="337.58" y="426.1" width="1.25" height="7.8" fill="#f2f2f2"/>
<rect x="339.25" y="402.0" width="1.25" height="4.3" fill="#f2f2f2"/>
<rect x="339.25" y="406.4" width="1.25" height="15.2" fill="#b40000"/>
<rect x="339.25" y="421.6" width="1.25" height="1.6" fill="#f2f2f2"/>
<rect x="340.92" y="392.6" width="1.25" height="2.0" fill="#f2f2f2"/>
<rect x="340.92" y="394.6" width="1.25" height="16.8" fill="#b40000"/>
<rect x="340.92" y="411.4" width="1.25" height="7.5" fill="#f2f2f2"/>
<rect x="342.58" y="398.3" width="1.25" height="4.1" fill="#f2f2f2"/>
<rect x="342.58" y="402.4" width="1.25" height="6.0" fill="#f2f2f2"/>
<rect x="342.58" y="408.4" width="1.25" height="1.2" fill="#f2f2f2"/>
<rect x="344.25" y="394.1" width="1.25" height="4.1" fill="#f2f2f2"/>
<rect x="344.25" y="398.2" width="1.25" height="2.9" fill="#b40000"/>
<rect x="344.25" y="401.0" width="1.25" height="4.4" fill="#f2f2f2"/>
<rect x="345.92" y="388.9" width="1.25" height="5.8" fill="#f2f2f2"/>
<rect x="345.92" y="394.6" width="1.25" height="6.4" fill="#b40000"/>
<rect x="345.92" y="401.1" width="1.25" height="2.8" fill="#f2f2f2"/>
<rect x="347.58" y="372.0" width="1.25" height="12.7" fill="#f2f2f2"/>
<rect x="347.58" y="384.6" width="1.25" height="8.4" fill="#008c00"/>
<rect x="347.58" y="393.0" width="1.25" height="10.9" fill="#f2f2f2"/>
<rect x="349.25" y="363.5" width="1.25" height="3.2" fill="#f2f2f2"/>
<rect x="349.25" y="366.7" width="1.25" height="9.1" fill="#b40000"/>
<rect x="349.25" y="375.8" width="1.25" height="3.7" fill="#f2f2f2"/>
<rect x="350.92" y="363.5" width="1.25" height="1.9" fill="#f2f2f2"/>
<rect x="350.92" y="365.4" width="1.25" height="11.5" fill="#b40000"/>
<rect x="350.92" y="376.9" width="1.25" height="2.6" fill="#f2f2f2"/>
<rect x="352.58" y="368.2" width="1.25" height="2.2" fill="#f2f2f2"/>
<rect x="352.58" y="370.5" width="1.25" height="27.6" fill="#cfc8c8"/>
<rect x="352.58" y="398.0" width="1.25" height="9.6" fill="#f2f2f2"/>
<rect x="354.25" y="375.2" width="1.25" height="6.0" fill="#f2f2f2"/>
<rect x="354.25" y="381.2" width="1.25" height="11.3" fill="#b40000"/>
<rect x="354.25" y="392.4" width="1.25" height="5.1" fill="#f2f2f2"/>
<rect x="355.92" y="382.3" width="1.25" height="8.5" fill="#f2f2f2"/>
<rect x="355.92" y="390.8" width="1.25" height="6.0" fill="#b40000"/>
<rect x="355.92" y="396.9" width="1.25" height="7.0" fill="#f2f2f2"/>
<rect x="357.58" y="357.0" width="1.25" height="2.8" fill="#f2f2f2"/>
<rect x="357.58" y="359.7" width="1.25" height="24.6" fill="#f2f2f2"/>
<rect x="357.58" y="384.3" width="1.25" height="4.6" fill="#f2f2f2"/>
<rect x="359.25" y="357.0" width="1.25" height="9.1" fill="#f2f2f2"/>
<rect x="359.25" y="366.1" width="1.25" height="15.0" fill="#b40000"/>
<rect x="359.25" y="381.1" width="1.25" height="4.1" fill="#f2f2f2"/>
<rect x="360.92" y="377.6" width="1.25" height="7.1" fill="#f2f2f2"/>
<rect x="360.92" y="384.7" width="1.25" height="15.5" fill="#b40000"/>
<rect x="360.92" y="400.1" width="1.25" height="13.2" fill="#f2f2f2"/>
<rect x="362.58" y="382.5" width="1.25" height="10.4" fill="#f2f2f2"/>
<rect x="362.58" y="392.8" width="1.25" height="10.6" fill="#b40000"/>
<rect x="362.58" y="403.4" width="1.25" height="7.0" fill="#f2f2f2"/>
<rect x="364.25" y="389.2" width="1.25" height="5.9" fill="#f2f2f2"/>
<rect x="364.25" y="395.1" width="1.25" height="10.3" fill="#b40000"/>
<rect x="364.25" y="405.5" width="1.25" height="4.0" fill="#f2f2f2"/>
<rect x="365.92" y="392.6" width="1.25" height="7.8" fill="#f2f2f2"/>
<rect x="365.92" y="400.4" width="1.25" height="7.2" fill="#b40000"/>
<rect x="365.92" y="407.7" width="1.25" height="5.6" fill="#f2f2f2"/>
<rect x="367.58" y="387.0" width="1.25" height="2.1" fill="#f2f2f2"/>
<rect x="367.58" y="389.1" width="1.25" height="15.0" fill="#f2f2f2"/>
<rect x="367.58" y="404.1" width="1.25" height="9.2" fill="#f2f2f2"/>
<rect x="560.82" y="606.3" width="1.25" height="63.9" fill="#f2f2f2"/>
<rect x="560.82" y="670.2" width="1.25" height="44.7" fill="#b40000"/>
<rect x="560.82" y="714.9" width="1.25" height="45.1" fill="#f2f2f2"/>
<rect x="562.49" y="643.8" width="1.25" height="22.9" fill="#f2f2f2"/>
<rect x="562.49" y="666.7" width="1.25" height="26.0" fill="#b40000"/>
<rect x="562.49" y="692.7" width="1.25" height="18.7" fill="#f2f2f2"/>
<rect x="564.16" y="644.7" width="1.25" height="20.9" fill="#f2f2f2"/>
<rect x="564.16" y="665.7" width="1.25" height="27.5" fill="#b40000"/>
<rect x="564.16" y="693.2" width="1.25" height="41.7" fill="#f2f2f2"/>
<rect x="565.82" y="656.9" width="1.25" height="17.7" fill="#f2f2f2"/>
<rect x="565.82" y="674.7" width="1.25" height="18.1" fill="#b40000"/>
<rect x="565.82" y="692.8" width="1.25" height="42.1" fill="#f2f2f2"/>
<rect x="567.49" y="688.9" width="1.25" height="5.5" fill="#f2f2f2"/>
<rect x="567.49" y="694.4" width="1.25" height="33.1" fill="#b40000"/>
<rect x="567.49" y="727.5" width="1.25" height="7.3" fill="#f2f2f2"/>
<rect x="569.16" y="692.6" width="1.25" height="14.8" fill="#f2f2f2"/>
<rect x="569.16" y="707.4" width="1.25" height="25.0" fill="#b40000"/>
<rect x="569.16" y="732.4" width="1.25" height="7.1" fill="#f2f2f2"/>
<rect x="570.82" y="649.4" width="1.25" height="6.3" fill="#f2f2f2"/>
<rect x="570.82" y="655.8" width="1.25" height="40.3" fill="#008c00"/>
<rect x="570.82" y="696.1" width="1.25" height="9.7" fill="#f2f2f2"/>
<rect x="572.49" y="643.4" width="1.25" height="9.6" fill="#f2f2f2"/>
<rect x="572.49" y="653.1" width="1.25" height="14.1" fill="#b40000"/>
<rect x="572.49" y="667.2" width="1.25" height="7.6" fill="#f2f2f2"/>
<rect x="574.16" y="613.8" width="1.25" height="12.2" fill="#f2f2f2"/>
<rect x="574.16" y="625.9" width="1.25" height="22.9" fill="#b40000"/>
<rect x="574.16" y="648.9" width="1.25" height="21.2" fill="#f2f2f2"/>
<rect x="575.82" y="624.1" width="1.25" height="11.1" fill="#f2f2f2"/>
<rect x="575.82" y="635.2" width="1.25" height="15.2" fill="#b40000"/>
<rect x="575.82" y="650.3" width="1.25" height="6.6" fill="#f2f2f2"/>
<rect x="577.49" y="627.2" width="1.25" height="6.3" fill="#f2f2f2"/>
<rect x="577.49" y="633.5" width="1.25" height="13.3" fill="#008c00"/>
<rect x="577.49" y="646.8" width="1.25" height="8.0" fill="#f2f2f2"/>
<rect x="579.16" y="614.2" width="1.25" height="11.8" fill="#f2f2f2"/>
<rect x="579.16" y="626.1" width="1.25" height="17.1" fill="#f2f2f2"/>
<rect x="579.16" y="643.2" width="1.25" height="10.8" fill="#f2f2f2"/>
<rect x="580.82" y="609.1" width="1.25" height="7.9" fill="#f2f2f2"/>
<rect x="580.82" y="617.0" width="1.25" height="34.9" fill="#008c00"/>
<rect x="580.82" y="651.9" width="1.25" height="3.2" fill="#f2f2f2"/>
<rect x="582.49" y="639.1" width="1.25" height="4.0" fill="#f2f2f2"/>
<rect x="582.49" y="643.1" width="1.25" height="33.0" fill="#b40000"/>
<rect x="582.49" y="676.1" width="1.25" height="16.5" fill="#f2f2f2"/>
<rect x="584.16" y="643.8" width="1.25" height="14.7" fill="#f2f2f2"/>
<rect x="584.16" y="658.5" width="1.25" height="13.2" fill="#b40000"/>
<rect x="584.16" y="671.7" width="1.25" height="33.1" fill="#f2f2f2"/>
<rect x="585.82" y="645.1" width="1.25" height="7.6" fill="#f2f2f2"/>
<rect x="585.82" y="652.7" width="1.25" height="36.5" fill="#cfc8c8"/>
<rect x="585.82" y="689.3" width="1.25" height="6.9" fill="#f2f2f2"/>
<rect x="587.49" y="641.2" width="1.25" height="7.2" fill="#f2f2f2"/>
<rect x="587.49" y="648.5" width="1.25" height="22.8" fill="#b40000"/>
<rect x="587.49" y="671.3" width="1.25" height="5.0" fill="#f2f2f2"/>
<rect x="589.16" y="629.7" width="1.25" height="19.4" fill="#f2f2f2"/>
<rect x="589.16" y="649.2" width="1.25" height="18.3" fill="#f2f2f2"/>
<rect x="589.16" y="667.5" width="1.25" height="12.0" fill="#f2f2f2"/>
<rect x="590.82" y="634.4" width="1.25" height="13.8" fill="#f2f2f2"/>
<rect x="590.82" y="648.3" width="1.25" height="16.2" fill="#b40000"/>
<rect x="590.82" y="664.4" width="1.25" height="5.6" fill="#f2f2f2"/>
<rect x="592.49" y="634.4" width="1.25" height="5.0" fill="#f2f2f2"/>
<rect x="592.49" y="639.4" width="1.25" height="12.8" fill="#008c00"/>
<rect x="592.49" y="652.2" width="1.25" height="5.2" fill="#f2f2f2"/>
<rect x="594.16" y="634.4" width="1.25" height="6.4" fill="#f2f2f2"/>
<rect x="594.16" y="640.8" width="1.25" height="20.3" fill="#b40000"/>
<rect x="594.16" y="661.1" width="1.25" height="1.5" fill="#f2f2f2"/>
<rect x="595.82" y="634.4" width="1.25" height="2.3" fill="#f2f2f2"/>
<rect x="595.82" y="636.7" width="1.25" height="20.5" fill="#b40000"/>
<rect x="595.82" y="657.2" width="1.25" height="5.3" fill="#f2f2f2"/>
<rect x="597.49" y="634.6" width="1.25" height="1.4" fill="#f2f2f2"/>
<rect x="597.49" y="636.1" width="1.25" height="6.7" fill="#b40000"/>
<rect x="597.49" y="642.8" width="1.25" height="2.8" fill="#f2f2f2"/>
<rect x="599.16" y="634.4" width="1.25" height="4.7" fill="#f2f2f2"/>
<rect x="599.16" y="639.1" width="1.25" height="6.1" fill="#cfc8c8"/>
<rect x="599.16" y="645.2" width="1.25" height="4.2" fill="#f2f2f2"/>
<rect x="600.82" y="634.7" width="1.25" height="2.7" fill="#f2f2f2"/>
<rect x="600.82" y="637.4" width="1.25" height="7.3" fill="#008c00"/>
<rect x="600.82" y="644.6" width="1.25" height="6.5" fill="#f2f2f2"/>
<rect x="602.49" y="629.7" width="1.25" height="7.1" fill="#f2f2f2"/>
<rect x="602.49" y="636.8" width="1.25" height="9.9" fill="#b40000"/>
<rect x="602.49" y="646.7" width="1.25" height="6.5" fill="#f2f2f2"/>
<rect x="604.16" y="632.9" width="1.25" height="3.3" fill="#f2f2f2"/>
<rect x="604.16" y="636.2" width="1.25" height="5.1" fill="#f2f2f2"/>
<rect x="604.16" y="641.3" width="1.25" height="3.7" fill="#f2f2f2"/>
<rect x="605.82" y="619.4" width="1.25" height="1.9" fill="#f2f2f2"/>
<rect x="605.82" y="621.3" width="1.25" height="12.5" fill="#f2f2f2"/>
<rect x="605.82" y="633.8" width="1.25" height="4.4" fill="#f2f2f2"/>
<rect x="607.49" y="625.5" width="1.25" height="5.3" fill="#f2f2f2"/>
<rect x="607.49" y="630.8" width="1.25" height="6.3" fill="#f2f2f2"/>
<rect x="607.49" y="637.1" width="1.25" height="3.9" fill="#f2f2f2"/>
<rect x="609.16" y="625.2" width="1.25" height="2.7" fill="#f2f2f2"/>
<rect x="609.16" y="628.0" width="1.25" height="17.0" fill="#cfc8c8"/>
<rect x="609.16" y="644.9" width="1.25" height="1.3" fill="#f2f2f2"/>
<rect x="610.82" y="625.0" width="1.25" height="4.3" fill="#f2f2f2"/>
<rect x="610.82" y="629.3" width="1.25" height="18.0" fill="#b40000"/>
<rect x="610.82" y="647.3" width="1.25" height="2.1" fill="#f2f2f2"/>
<rect x="612.49" y="629.9" width="1.25" height="6.5" fill="#f2f2f2"/>
<rect x="612.49" y="636.5" width="1.25" height="10.8" fill="#cfc8c8"/>
<rect x="612.49" y="647.2" width="1.25" height="7.0" fill="#f2f2f2"/>
<rect x="614.16" y="629.7" width="1.25" height="1.5" fill="#f2f2f2"/>
<rect x="614.16" y="631.2" width="1.25" height="18.0" fill="#008c00"/>
<rect x="614.16" y="649.2" width="1.25" height="9.6" fill="#f2f2f2"/>
<rect x="615.82" y="649.4" width="1.25" height="8.1" fill="#f2f2f2"/>
<rect x="615.82" y="657.5" width="1.25" height="19.1" fill="#cfc8c8"/>
<rect x="615.82" y="676.6" width="1.25" height="8.5" fill="#f2f2f2"/>
<rect x="617.49" y="664.4" width="1.25" height="3.4" fill="#f2f2f2"/>
<rect x="617.49" y="667.9" width="1.25" height="19.6" fill="#cfc8c8"/>
<rect x="617.49" y="687.5" width="1.25" height="1.9" fill="#f2f2f2"/>
<rect x="619.16" y="679.5" width="1.25" height="7.7" fill="#f2f2f2"/>
<rect x="619.16" y="687.2" width="1.25" height="14.5" fill="#b40000"/>
<rect x="619.16" y="701.7" width="1.25" height="3.1" fill="#f2f2f2"/>
<rect x="620.82" y="686.1" width="1.25" height="3.9" fill="#f2f2f2"/>
<rect x="620.82" y="690.1" width="1.25" height="12.8" fill="#008c00"/>
<rect x="620.82" y="702.9" width="1.25" height="4.7" fill="#f2f2f2"/>
<rect x="622.49" y="685.1" width="1.25" height="8.1" fill="#f2f2f2"/>
<rect x="622.49" y="693.2" width="1.25" height="10.5" fill="#cfc8c8"/>
<rect x="622.49" y="703.7" width="1.25" height="6.7" fill="#f2f2f2"/>
<rect x="624.16" y="678.2" width="1.25" height="3.4" fill="#f2f2f2"/>
<rect x="624.16" y="681.6" width="1.25" height="13.7" fill="#b40000"/>
<rect x="624.16" y="695.3" width="1.25" height="7.7" fill="#f2f2f2"/>
<rect x="625.82" y="664.5" width="1.25" height="10.0" fill="#f2f2f2"/>
<rect x="625.82" y="674.5" width="1.25" height="28.1" fill="#b40000"/>
<rect x="625.82" y="702.6" width="1.25" height="2.2" fill="#f2f2f2"/>
<rect x="627.49" y="670.6" width="1.25" height="4.5" fill="#f2f2f2"/>
<rect x="627.49" y="675.0" width="1.25" height="6.4" fill="#cfc8c8"/>
<rect x="627.49" y="681.5" width="1.25" height="4.4" fill="#f2f2f2"/>
<rect x="629.16" y="670.1" width="1.25" height="3.5" fill="#f2f2f2"/>
<rect x="629.16" y="673.6" width="1.25" height="8.4" fill="#b40000"/>
<rect x="629.16" y="681.9" width="1.25" height="3.2" fill="#f2f2f2"/>
<rect x="630.82" y="668.2" width="1.25" height="1.5" fill="#f2f2f2"/>
<rect x="630.82" y="669.7" width="1.25" height="6.3" fill="#f2f2f2"/>
<rect x="630.82" y="676.0" width="1.25" height="5.0" fill="#f2f2f2"/>
<rect x="632.49" y="665.7" width="1.25" height="6.1" fill="#f2f2f2"/>
<rect x="632.49" y="671.7" width="1.25" height="4.9" fill="#008c00"/>
<rect x="632.49" y="676.7" width="1.25" height="7.0" fill="#f2f2f2"/>
<rect x="634.16" y="664.5" width="1.25" height="3.0" fill="#f2f2f2"/>
<rect x="634.16" y="667.4" width="1.25" height="15.1" fill="#008c00"/>
<rect x="634.16" y="682.6" width="1.25" height="2.5" fill="#f2f2f2"/>
<rect x="635.83" y="664.7" width="1.25" height="1.6" fill="#f2f2f2"/>
<rect x="635.83" y="666.4" width="1.25" height="11.0" fill="#cfc8c8"/>
<rect x="635.83" y="677.4" width="1.25" height="3.9" fill="#f2f2f2"/>
<rect x="637.49" y="664.5" width="1.25" height="1.4" fill="#f2f2f2"/>
<rect x="637.49" y="665.9" width="1.25" height="8.5" fill="#f2f2f2"/>
<rect x="637.49" y="674.4" width="1.25" height="5.1" fill="#f2f2f2"/>
<rect x="639.16" y="667.2" width="1.25" height="1.7" fill="#f2f2f2"/>
<rect x="639.16" y="668.9" width="1.25" height="6.5" fill="#cfc8c8"/>
<rect x="639.16" y="675.5" width="1.25" height="4.7" fill="#f2f2f2"/>
<rect x="640.83" y="661.9" width="1.25" height="3.5" fill="#f2f2f2"/>
<rect x="640.83" y="665.4" width="1.25" height="8.9" fill="#b40000"/>
<rect x="640.83" y="674.2" width="1.25" height="3.2" fill="#f2f2f2"/>
<rect x="642.49" y="659.8" width="1.25" height="2.5" fill="#f2f2f2"/>
<rect x="642.49" y="662.3" width="1.25" height="18.5" fill="#b40000"/>
<rect x="642.49" y="680.8" width="1.25" height="4.3" fill="#f2f2f2"/>
<rect x="644.16" y="671.1" width="1.25" height="5.0" fill="#f2f2f2"/>
<rect x="644.16" y="676.1" width="1.25" height="5.5" fill="#b40000"/>
<rect x="644.16" y="681.6" width="1.25" height="5.5" fill="#f2f2f2"/>
<rect x="645.83" y="673.8" width="1.25" height="7.7" fill="#f2f2f2"/>
<rect x="645.83" y="681.6" width="1.25" height="6.7" fill="#b40000"/>
<rect x="645.83" y="688.3" width="1.25" height="6.2" fill="#f2f2f2"/>
<rect x="647.49" y="674.3" width="1.25" height="3.2" fill="#f2f2f2"/>
<rect x="647.49" y="677.6" width="1.25" height="7.1" fill="#008c00"/>
<rect x="647.49" y="684.7" width="1.25" height="6.9" fill="#f2f2f2"/>
<rect x="649.16" y="673.8" width="1.25" height="2.6" fill="#f2f2f2"/>
<rect x="649.16" y="676.5" width="1.25" height="9.4" fill="#cfc8c8"/>
<rect x="649.16" y="685.9" width="1.25" height="3.0" fill="#f2f2f2"/>
<rect x="650.83" y="668.9" width="1.25" height="3.8" fill="#f2f2f2"/>
<rect x="650.83" y="672.7" width="1.25" height="5.6" fill="#b40000"/>
<rect x="650.83" y="678.3" width="1.25" height="1.7" fill="#f2f2f2"/>
<rect x="652.49" y="659.8" width="1.25" height="2.7" fill="#f2f2f2"/>
<rect x="652.49" y="662.5" width="1.25" height="14.2" fill="#f2f2f2"/>
<rect x="652.49" y="676.7" width="1.25" height="2.8" fill="#f2f2f2"/>
<rect x="654.16" y="669.0" width="1.25" height="5.6" fill="#f2f2f2"/>
<rect x="654.16" y="674.5" width="1.25" height="3.7" fill="#008c00"/>
<rect x="654.16" y="678.2" width="1.25" height="5.2" fill="#f2f2f2"/>
<rect x="655.83" y="675.7" width="1.25" height="5.1" fill="#f2f2f2"/>
<rect x="655.83" y="680.8" width="1.25" height="6.7" fill="#f2f2f2"/>
<rect x="655.83" y="687.6" width="1.25" height="6.9" fill="#f2f2f2"/>
<rect x="657.49" y="672.8" width="1.25" height="1.2" fill="#f2f2f2"/>
<rect x="657.49" y="674.0" width="1.25" height="10.9" fill="#cfc8c8"/>
<rect x="657.49" y="684.9" width="1.25" height="5.3" fill="#f2f2f2"/>
<rect x="659.16" y="670.1" width="1.25" height="5.9" fill="#f2f2f2"/>
<rect x="659.16" y="676.0" width="1.25" height="7.7" fill="#008c00"/>
<rect x="659.16" y="683.7" width="1.25" height="5.2" fill="#f2f2f2"/>
<rect x="660.83" y="666.0" width="1.25" height="1.5" fill="#f2f2f2"/>
<rect x="660.83" y="667.5" width="1.25" height="10.6" fill="#f2f2f2"/>
<rect x="660.83" y="678.1" width="1.25" height="3.3" fill="#f2f2f2"/>
<rect x="662.49" y="664.5" width="1.25" height="7.2" fill="#f2f2f2"/>
<rect x="662.49" y="671.7" width="1.25" height="8.6" fill="#cfc8c8"/>
<rect x="662.49" y="680.4" width="1.25" height="2.6" fill="#f2f2f2"/>
<rect x="664.16" y="659.8" width="1.25" height="4.5" fill="#f2f2f2"/>
<rect x="664.16" y="664.3" width="1.25" height="17.4" fill="#cfc8c8"/>
<rect x="664.16" y="681.7" width="1.25" height="7.1" fill="#f2f2f2"/>
<rect x="665.83" y="658.8" width="1.25" height="2.3" fill="#f2f2f2"/>
<rect x="665.83" y="661.1" width="1.25" height="9.7" fill="#b40000"/>
<rect x="665.83" y="670.8" width="1.25" height="7.0" fill="#f2f2f2"/>
<rect x="667.49" y="655.1" width="1.25" height="3.1" fill="#f2f2f2"/>
<rect x="667.49" y="658.2" width="1.25" height="12.3" fill="#008c00"/>
<rect x="667.49" y="670.5" width="1.25" height="9.0" fill="#f2f2f2"/>
<rect x="669.16" y="660.8" width="1.25" height="2.9" fill="#f2f2f2"/>
<rect x="669.16" y="663.7" width="1.25" height="19.8" fill="#b40000"/>
<rect x="669.16" y="683.4" width="1.25" height="2.0" fill="#f2f2f2"/>
<rect x="670.83" y="670.1" width="1.25" height="2.4" fill="#f2f2f2"/>
<rect x="670.83" y="672.5" width="1.25" height="22.8" fill="#008c00"/>
<rect x="670.83" y="695.3" width="1.25" height="3.9" fill="#f2f2f2"/>
<rect x="672.49" y="685.1" width="1.25" height="4.9" fill="#f2f2f2"/>
<rect x="672.49" y="690.0" width="1.25" height="7.7" fill="#b40000"/>
<rect x="672.49" y="697.7" width="1.25" height="7.1" fill="#f2f2f2"/>
<rect x="674.16" y="686.3" width="1.25" height="3.8" fill="#f2f2f2"/>
<rect x="674.16" y="690.1" width="1.25" height="9.6" fill="#008c00"/>
<rect x="674.16" y="699.7" width="1.25" height="3.0" fill="#f2f2f2"/>
<rect x="675.83" y="685.1" width="1.25" height="1.3" fill="#f2f2f2"/>
<rect x="675.83" y="686.5" width="1.25" height="14.7" fill="#b40000"/>
<rect x="675.83" y="701.1" width="1.25" height="2.8" fill="#f2f2f2"/>
<rect x="677.49" y="692.4" width="1.25" height="4.9" fill="#f2f2f2"/>
<rect x="677.49" y="697.3" width="1.25" height="6.8" fill="#008c00"/>
<rect x="677.49" y="704.1" width="1.25" height="6.3" fill="#f2f2f2"/>
<rect x="679.16" y="700.1" width="1.25" height="2.9" fill="#f2f2f2"/>
<rect x="679.16" y="703.0" width="1.25" height="14.2" fill="#b40000"/>
<rect x="679.16" y="717.1" width="1.25" height="2.7" fill="#f2f2f2"/>
<rect x="680.83" y="698.0" width="1.25" height="5.5" fill="#f2f2f2"/>
<rect x="680.83" y="703.6" width="1.25" height="4.7" fill="#f2f2f2"/>
<rect x="680.83" y="708.3" width="1.25" height="5.7" fill="#f2f2f2"/>
<rect x="682.49" y="689.8" width="1.25" height="1.6" fill="#f2f2f2"/>
<rect x="682.49" y="691.4" width="1.25" height="16.2" fill="#b40000"/>
<rect x="682.49" y="707.6" width="1.25" height="7.6" fill="#f2f2f2"/>
<rect x="684.16" y="696.1" width="1.25" height="1.2" fill="#f2f2f2"/>
<rect x="684.16" y="697.2" width="1.25" height="17.6" fill="#cfc8c8"/>
<rect x="684.16" y="714.8" width="1.25" height="4.3" fill="#f2f2f2"/>
<rect x="685.83" y="700.1" width="1.25" height="8.6" fill="#f2f2f2"/>
<rect x="685.83" y="708.7" width="1.25" height="7.9" fill="#f2f2f2"/>
<rect x="685.83" y="716.6" width="1.25" height="8.9" fill="#f2f2f2"/>
<rect x="687.49" y="689.0" width="1.25" height="3.3" fill="#f2f2f2"/>
<rect x="687.49" y="692.3" width="1.25" height="21.2" fill="#b40000"/>
<rect x="687.49" y="713.5" width="1.25" height="7.5" fill="#f2f2f2"/>
<rect x="689.16" y="677.6" width="1.25" height="16.0" fill="#f2f2f2"/>
<rect x="689.16" y="693.6" width="1.25" height="13.4" fill="#cfc8c8"/>
<rect x="689.16" y="707.1" width="1.25" height="12.8" fill="#f2f2f2"/>
<rect x="690.83" y="698.3" width="1.25" height="6.6" fill="#f2f2f2"/>
<rect x="690.83" y="704.9" width="1.25" height="18.9" fill="#008c00"/>
<rect x="690.83" y="723.8" width="1.25" height="1.7" fill="#f2f2f2"/>
<rect x="692.49" y="700.1" width="1.25" height="3.9" fill="#f2f2f2"/>
<rect x="692.49" y="704.1" width="1.25" height="14.9" fill="#f2f2f2"/>
<rect x="692.49" y="719.0" width="1.25" height="11.2" fill="#f2f2f2"/>
<rect x="694.16" y="700.1" width="1.25" height="2.3" fill="#f2f2f2"/>
<rect x="694.16" y="702.5" width="1.25" height="11.2" fill="#cfc8c8"/>
<rect x="694.16" y="713.7" width="1.25" height="1.4" fill="#f2f2f2"/>
<rect x="695.83" y="700.1" width="1.25" height="9.2" fill="#f2f2f2"/>
<rect x="695.83" y="709.3" width="1.25" height="14.6" fill="#b40000"/>
<rect x="695.83" y="724.0" width="1.25" height="10.0" fill="#f2f2f2"/>
<rect x="880.04" y="656.9" width="1.25" height="19.2" fill="#f2f2f2"/>
<rect x="880.04" y="676.1" width="1.25" height="26.9" fill="#b40000"/>
<rect x="880.04" y="703.0" width="1.25" height="42.1" fill="#f2f2f2"/>
<rect x="881.71" y="656.9" width="1.25" height="26.2" fill="#f2f2f2"/>
<rect x="881.71" y="683.2" width="1.25" height="21.6" fill="#008c00"/>
<rect x="881.71" y="704.7" width="1.25" height="40.4" fill="#f2f2f2"/>
<rect x="883.38" y="656.9" width="1.25" height="2.8" fill="#f2f2f2"/>
<rect x="883.38" y="659.8" width="1.25" height="41.6" fill="#cfc8c8"/>
<rect x="883.38" y="701.3" width="1.25" height="8.2" fill="#f2f2f2"/>
<rect x="885.04" y="655.1" width="1.25" height="17.4" fill="#f2f2f2"/>
<rect x="885.04" y="672.4" width="1.25" height="15.3" fill="#008c00"/>
<rect x="885.04" y="687.7" width="1.25" height="12.4" fill="#f2f2f2"/>
<rect x="886.71" y="654.1" width="1.25" height="5.4" fill="#f2f2f2"/>
<rect x="886.71" y="659.6" width="1.25" height="19.0" fill="#b40000"/>
<rect x="886.71" y="678.6" width="1.25" height="15.4" fill="#f2f2f2"/>
<rect x="888.38" y="649.4" width="1.25" height="6.8" fill="#f2f2f2"/>
<rect x="888.38" y="656.2" width="1.25" height="33.9" fill="#cfc8c8"/>
<rect x="888.38" y="690.1" width="1.25" height="2.5" fill="#f2f2f2"/>
<rect x="890.04" y="639.1" width="1.25" height="8.9" fill="#f2f2f2"/>
<rect x="890.04" y="648.0" width="1.25" height="16.0" fill="#008c00"/>
<rect x="890.04" y="664.0" width="1.25" height="6.1" fill="#f2f2f2"/>
<rect x="891.71" y="634.4" width="1.25" height="8.5" fill="#f2f2f2"/>
<rect x="891.71" y="642.9" width="1.25" height="10.3" fill="#b40000"/>
<rect x="891.71" y="653.2" width="1.25" height="11.2" fill="#f2f2f2"/>
<rect x="893.38" y="634.4" width="1.25" height="2.2" fill="#f2f2f2"/>
<rect x="893.38" y="636.6" width="1.25" height="27.5" fill="#b40000"/>
<rect x="893.38" y="664.1" width="1.25" height="6.0" fill="#f2f2f2"/>
<rect x="895.04" y="634.4" width="1.25" height="7.1" fill="#f2f2f2"/>
<rect x="895.04" y="641.5" width="1.25" height="14.4" fill="#008c00"/>
<rect x="895.04" y="655.9" width="1.25" height="2.9" fill="#f2f2f2"/>
<rect x="896.71" y="644.9" width="1.25" height="2.9" fill="#f2f2f2"/>
<rect x="896.71" y="647.8" width="1.25" height="11.6" fill="#008c00"/>
<rect x="896.71" y="659.4" width="1.25" height="9.3" fill="#f2f2f2"/>
<rect x="898.38" y="649.4" width="1.25" height="10.1" fill="#f2f2f2"/>
<rect x="898.38" y="659.6" width="1.25" height="16.0" fill="#b40000"/>
<rect x="898.38" y="675.5" width="1.25" height="3.9" fill="#f2f2f2"/>
<rect x="900.04" y="665.4" width="1.25" height="8.9" fill="#f2f2f2"/>
<rect x="900.04" y="674.3" width="1.25" height="14.9" fill="#b40000"/>
<rect x="900.04" y="689.2" width="1.25" height="4.3" fill="#f2f2f2"/>
<rect x="901.71" y="670.1" width="1.25" height="7.8" fill="#f2f2f2"/>
<rect x="901.71" y="677.9" width="1.25" height="23.0" fill="#f2f2f2"/>
<rect x="901.71" y="700.8" width="1.25" height="4.0" fill="#f2f2f2"/>
<rect x="903.38" y="671.9" width="1.25" height="7.6" fill="#f2f2f2"/>
<rect x="903.38" y="679.5" width="1.25" height="10.3" fill="#cfc8c8"/>
<rect x="903.38" y="689.8" width="1.25" height="2.0" fill="#f2f2f2"/>
<rect x="905.04" y="665.4" width="1.25" height="3.6" fill="#f2f2f2"/>
<rect x="905.04" y="669.0" width="1.25" height="14.1" fill="#008c00"/>
<rect x="905.04" y="683.1" width="1.25" height="11.4" fill="#f2f2f2"/>
<rect x="906.71" y="664.5" width="1.25" height="2.8" fill="#f2f2f2"/>
<rect x="906.71" y="667.2" width="1.25" height="34.7" fill="#b40000"/>
<rect x="906.71" y="702.0" width="1.25" height="2.9" fill="#f2f2f2"/>
<rect x="908.38" y="664.5" width="1.25" height="7.5" fill="#f2f2f2"/>
<rect x="908.38" y="672.0" width="1.25" height="5.7" fill="#008c00"/>
<rect x="908.38" y="677.7" width="1.25" height="7.4" fill="#f2f2f2"/>
<rect x="910.04" y="674.0" width="1.25" height="2.6" fill="#f2f2f2"/>
<rect x="910.04" y="676.7" width="1.25" height="11.4" fill="#f2f2f2"/>
<rect x="910.04" y="688.1" width="1.25" height="1.8" fill="#f2f2f2"/>
<rect x="911.71" y="685.1" width="1.25" height="4.7" fill="#f2f2f2"/>
<rect x="911.71" y="689.8" width="1.25" height="9.4" fill="#f2f2f2"/>
<rect x="911.71" y="699.2" width="1.25" height="1.0" fill="#f2f2f2"/>
<rect x="913.38" y="693.7" width="1.25" height="2.0" fill="#f2f2f2"/>
<rect x="913.38" y="695.8" width="1.25" height="8.9" fill="#008c00"/>
<rect x="913.38" y="704.6" width="1.25" height="1.3" fill="#f2f2f2"/>
<rect x="915.04" y="700.1" width="1.25" height="2.2" fill="#f2f2f2"/>
<rect x="915.04" y="702.3" width="1.25" height="10.2" fill="#b40000"/>
<rect x="915.04" y="712.5" width="1.25" height="2.6" fill="#f2f2f2"/>
<rect x="916.71" y="700.1" width="1.25" height="1.4" fill="#f2f2f2"/>
<rect x="916.71" y="701.5" width="1.25" height="7.8" fill="#f2f2f2"/>
<rect x="916.71" y="709.3" width="1.25" height="5.8" fill="#f2f2f2"/>
<rect x="918.38" y="707.9" width="1.25" height="3.3" fill="#f2f2f2"/>
<rect x="918.38" y="711.3" width="1.25" height="4.5" fill="#f2f2f2"/>
<rect x="918.38" y="715.8" width="1.25" height="2.0" fill="#f2f2f2"/>
<rect x="920.04" y="709.5" width="1.25" height="3.4" fill="#f2f2f2"/>
<rect x="920.04" y="713.0" width="1.25" height="9.6" fill="#b40000"/>
<rect x="920.04" y="722.6" width="1.25" height="2.9" fill="#f2f2f2"/>
<rect x="921.71" y="709.5" width="1.25" height="2.4" fill="#f2f2f2"/>
<rect x="921.71" y="711.9" width="1.25" height="14.6" fill="#f2f2f2"/>
<rect x="921.71" y="726.5" width="1.25" height="3.7" fill="#f2f2f2"/>
<rect x="923.38" y="709.5" width="1.25" height="1.0" fill="#f2f2f2"/>
<rect x="923.38" y="710.5" width="1.25" height="11.9" fill="#f2f2f2"/>
<rect x="923.38" y="722.4" width="1.25" height="3.1" fill="#f2f2f2"/>
<rect x="925.04" y="709.4" width="1.25" height="1.0" fill="#f2f2f2"/>
<rect x="925.04" y="710.4" width="1.25" height="13.4" fill="#b40000"/>
<rect x="925.04" y="723.8" width="1.25" height="1.1" fill="#f2f2f2"/>
<rect x="926.71" y="703.9" width="1.25" height="3.0" fill="#f2f2f2"/>
<rect x="926.71" y="706.9" width="1.25" height="11.8" fill="#f2f2f2"/>
<rect x="926.71" y="718.7" width="1.25" height="6.7" fill="#f2f2f2"/>
<rect x="928.38" y="710.1" width="1.25" height="7.2" fill="#f2f2f2"/>
<rect x="928.38" y="717.4" width="1.25" height="6.6" fill="#b40000"/>
<rect x="928.38" y="723.9" width="1.25" height="5.0" fill="#f2f2f2"/>
<rect x="930.04" y="715.1" width="1.25" height="5.9" fill="#f2f2f2"/>
<rect x="930.04" y="721.1" width="1.25" height="10.6" fill="#b40000"/>
<rect x="930.04" y="731.7" width="1.25" height="3.2" fill="#f2f2f2"/>
<rect x="931.71" y="715.1" width="1.25" height="1.0" fill="#f2f2f2"/>
<rect x="931.71" y="715.9" width="1.25" height="9.5" fill="#b40000"/>
<rect x="931.71" y="725.4" width="1.25" height="4.7" fill="#f2f2f2"/>
<rect x="933.38" y="725.5" width="1.25" height="9.4" fill="#f2f2f2"/>
<rect x="933.38" y="734.9" width="1.25" height="12.0" fill="#f2f2f2"/>
<rect x="933.38" y="746.9" width="1.25" height="13.1" fill="#f2f2f2"/>
<rect x="935.04" y="744.4" width="1.25" height="2.1" fill="#f2f2f2"/>
<rect x="935.04" y="746.5" width="1.25" height="10.4" fill="#b40000"/>
<rect x="935.04" y="756.9" width="1.25" height="3.4" fill="#f2f2f2"/>
<rect x="936.71" y="746.3" width="1.25" height="9.4" fill="#f2f2f2"/>
<rect x="936.71" y="755.6" width="1.25" height="10.5" fill="#f2f2f2"/>
<rect x="936.71" y="766.1" width="1.25" height="4.5" fill="#f2f2f2"/>
<rect x="938.38" y="745.3" width="1.25" height="2.4" fill="#f2f2f2"/>
<rect x="938.38" y="747.8" width="1.25" height="7.0" fill="#b40000"/>
<rect x="938.38" y="754.8" width="1.25" height="2.7" fill="#f2f2f2"/>
<rect x="940.04" y="755.6" width="1.25" height="2.1" fill="#f2f2f2"/>
<rect x="940.04" y="757.8" width="1.25" height="10.4" fill="#f2f2f2"/>
<rect x="940.04" y="768.2" width="1.25" height="6.2" fill="#f2f2f2"/>
<rect x="941.71" y="769.7" width="1.25" height="8.6" fill="#f2f2f2"/>
<rect x="941.71" y="778.2" width="1.25" height="8.6" fill="#cfc8c8"/>
<rect x="941.71" y="786.9" width="1.25" height="8.1" fill="#f2f2f2"/>
<rect x="943.38" y="776.6" width="1.25" height="3.2" fill="#f2f2f2"/>
<rect x="943.38" y="779.8" width="1.25" height="9.1" fill="#b40000"/>
<rect x="943.38" y="788.9" width="1.25" height="5.9" fill="#f2f2f2"/>
<rect x="945.04" y="780.0" width="1.25" height="2.5" fill="#f2f2f2"/>
<rect x="945.04" y="782.5" width="1.25" height="11.7" fill="#b40000"/>
<rect x="945.04" y="794.2" width="1.25" height="6.5" fill="#f2f2f2"/>
<rect x="946.71" y="780.0" width="1.25" height="1.0" fill="#f2f2f2"/>
<rect x="946.71" y="780.7" width="1.25" height="8.1" fill="#b40000"/>
<rect x="946.71" y="788.8" width="1.25" height="1.0" fill="#f2f2f2"/>
<rect x="948.38" y="775.3" width="1.25" height="2.5" fill="#f2f2f2"/>
<rect x="948.38" y="777.8" width="1.25" height="6.6" fill="#cfc8c8"/>
<rect x="948.38" y="784.4" width="1.25" height="5.9" fill="#f2f2f2"/>
<rect x="950.04" y="776.6" width="1.25" height="1.3" fill="#f2f2f2"/>
<rect x="950.04" y="777.9" width="1.25" height="13.7" fill="#b40000"/>
<rect x="950.04" y="791.6" width="1.25" height="1.4" fill="#f2f2f2"/>
<rect x="951.71" y="774.4" width="1.25" height="6.4" fill="#f2f2f2"/>
<rect x="951.71" y="780.8" width="1.25" height="10.7" fill="#008c00"/>
<rect x="951.71" y="791.5" width="1.25" height="4.5" fill="#f2f2f2"/>
<rect x="953.38" y="774.4" width="1.25" height="2.0" fill="#f2f2f2"/>
<rect x="953.38" y="776.4" width="1.25" height="5.5" fill="#b40000"/>
<rect x="953.38" y="781.9" width="1.25" height="2.8" fill="#f2f2f2"/>
<rect x="955.04" y="768.0" width="1.25" height="4.0" fill="#f2f2f2"/>
<rect x="955.04" y="772.0" width="1.25" height="8.8" fill="#f2f2f2"/>
<rect x="955.04" y="780.9" width="1.25" height="1.3" fill="#f2f2f2"/>
<rect x="956.71" y="760.3" width="1.25" height="3.3" fill="#f2f2f2"/>
<rect x="956.71" y="763.6" width="1.25" height="12.9" fill="#f2f2f2"/>
<rect x="956.71" y="776.5" width="1.25" height="5.4" fill="#f2f2f2"/>
<rect x="958.38" y="760.3" width="1.25" height="3.2" fill="#f2f2f2"/>
<rect x="958.38" y="763.5" width="1.25" height="5.9" fill="#008c00"/>
<rect x="958.38" y="769.4" width="1.25" height="1.2" fill="#f2f2f2"/>
<rect x="960.04" y="744.4" width="1.25" height="3.4" fill="#f2f2f2"/>
<rect x="960.04" y="747.8" width="1.25" height="19.3" fill="#b40000"/>
<rect x="960.04" y="767.1" width="1.25" height="2.6" fill="#f2f2f2"/>
<rect x="961.71" y="760.3" width="1.25" height="2.6" fill="#f2f2f2"/>
<rect x="961.71" y="762.9" width="1.25" height="6.0" fill="#f2f2f2"/>
<rect x="961.71" y="768.9" width="1.25" height="1.7" fill="#f2f2f2"/>
<rect x="963.38" y="764.8" width="1.25" height="1.5" fill="#f2f2f2"/>
<rect x="963.38" y="766.3" width="1.25" height="5.9" fill="#008c00"/>
<rect x="963.38" y="772.2" width="1.25" height="3.7" fill="#f2f2f2"/>
<rect x="965.04" y="760.3" width="1.25" height="7.8" fill="#f2f2f2"/>
<rect x="965.04" y="768.1" width="1.25" height="10.2" fill="#cfc8c8"/>
<rect x="965.04" y="778.3" width="1.25" height="1.7" fill="#f2f2f2"/>
<rect x="966.71" y="765.0" width="1.25" height="5.1" fill="#f2f2f2"/>
<rect x="966.71" y="770.1" width="1.25" height="4.8" fill="#008c00"/>
<rect x="966.71" y="774.8" width="1.25" height="5.2" fill="#f2f2f2"/>
<rect x="968.38" y="770.6" width="1.25" height="1.0" fill="#f2f2f2"/>
<rect x="968.38" y="771.2" width="1.25" height="7.3" fill="#f2f2f2"/>
<rect x="968.38" y="778.6" width="1.25" height="1.4" fill="#f2f2f2"/>
<rect x="970.04" y="774.0" width="1.25" height="2.1" fill="#f2f2f2"/>
<rect x="970.04" y="776.1" width="1.25" height="3.0" fill="#f2f2f2"/>
<rect x="970.04" y="779.1" width="1.25" height="3.1" fill="#f2f2f2"/>
<rect x="971.71" y="776.3" width="1.25" height="7.0" fill="#f2f2f2"/>
<rect x="971.71" y="783.2" width="1.25" height="8.7" fill="#008c00"/>
<rect x="971.71" y="791.9" width="1.25" height="4.1" fill="#f2f2f2"/>
<rect x="973.38" y="785.6" width="1.25" height="1.0" fill="#f2f2f2"/>
<rect x="973.38" y="786.3" width="1.25" height="5.7" fill="#f2f2f2"/>
<rect x="973.38" y="792.0" width="1.25" height="2.3" fill="#f2f2f2"/>
<rect x="975.04" y="784.7" width="1.25" height="1.3" fill="#f2f2f2"/>
<rect x="975.04" y="786.0" width="1.25" height="7.2" fill="#cfc8c8"/>
<rect x="975.04" y="793.2" width="1.25" height="1.8" fill="#f2f2f2"/>
<rect x="976.71" y="784.7" width="1.25" height="1.3" fill="#f2f2f2"/>
<rect x="976.71" y="785.9" width="1.25" height="7.6" fill="#b40000"/>
<rect x="976.71" y="793.6" width="1.25" height="1.4" fill="#f2f2f2"/>
<rect x="978.38" y="790.3" width="1.25" height="2.9" fill="#f2f2f2"/>
<rect x="978.38" y="793.2" width="1.25" height="6.2" fill="#cfc8c8"/>
<rect x="978.38" y="799.4" width="1.25" height="1.3" fill="#f2f2f2"/>
<rect x="980.04" y="800.6" width="1.25" height="1.7" fill="#f2f2f2"/>
<rect x="980.04" y="802.3" width="1.25" height="5.7" fill="#b40000"/>
<rect x="980.04" y="808.0" width="1.25" height="3.0" fill="#f2f2f2"/>
<rect x="981.71" y="805.1" width="1.25" height="2.6" fill="#f2f2f2"/>
<rect x="981.71" y="807.7" width="1.25" height="3.4" fill="#b40000"/>
<rect x="981.71" y="811.1" width="1.25" height="1.9" fill="#f2f2f2"/>
<rect x="983.38" y="805.3" width="1.25" height="1.2" fill="#f2f2f2"/>
<rect x="983.38" y="806.5" width="1.25" height="10.2" fill="#b40000"/>
<rect x="983.38" y="816.7" width="1.25" height="2.6" fill="#f2f2f2"/>
<rect x="985.04" y="810.0" width="1.25" height="2.8" fill="#f2f2f2"/>
<rect x="985.04" y="812.8" width="1.25" height="6.6" fill="#cfc8c8"/>
<rect x="985.04" y="819.5" width="1.25" height="1.0" fill="#f2f2f2"/>
<rect x="986.71" y="808.3" width="1.25" height="1.2" fill="#f2f2f2"/>
<rect x="986.71" y="809.5" width="1.25" height="5.5" fill="#008c00"/>
<rect x="986.71" y="815.0" width="1.25" height="1.3" fill="#f2f2f2"/>
<rect x="988.38" y="800.6" width="1.25" height="2.4" fill="#f2f2f2"/>
<rect x="988.38" y="803.0" width="1.25" height="8.9" fill="#f2f2f2"/>
<rect x="988.38" y="811.9" width="1.25" height="3.7" fill="#f2f2f2"/>
<rect x="990.04" y="810.0" width="1.25" height="2.0" fill="#f2f2f2"/>
<rect x="990.04" y="812.0" width="1.25" height="4.7" fill="#008c00"/>
<rect x="990.04" y="816.7" width="1.25" height="3.6" fill="#f2f2f2"/>
<rect x="991.71" y="795.0" width="1.25" height="2.8" fill="#f2f2f2"/>
<rect x="991.71" y="797.8" width="1.25" height="11.2" fill="#f2f2f2"/>
<rect x="991.71" y="809.0" width="1.25" height="1.9" fill="#f2f2f2"/>
<rect x="993.38" y="795.6" width="1.25" height="5.7" fill="#f2f2f2"/>
<rect x="993.38" y="801.3" width="1.25" height="6.8" fill="#b40000"/>
<rect x="993.38" y="808.0" width="1.25" height="3.1" fill="#f2f2f2"/>
<rect x="995.04" y="795.0" width="1.25" height="4.0" fill="#f2f2f2"/>
<rect x="995.04" y="799.0" width="1.25" height="9.3" fill="#f2f2f2"/>
<rect x="995.04" y="808.2" width="1.25" height="7.4" fill="#f2f2f2"/>
<rect x="996.71" y="805.3" width="1.25" height="1.1" fill="#f2f2f2"/>
<rect x="996.71" y="806.4" width="1.25" height="8.6" fill="#008c00"/>
<rect x="996.71" y="815.1" width="1.25" height="1.0" fill="#f2f2f2"/>
<rect x="998.38" y="810.0" width="1.25" height="2.8" fill="#f2f2f2"/>
<rect x="998.38" y="812.8" width="1.25" height="3.7" fill="#cfc8c8"/>
<rect x="998.38" y="816.5" width="1.25" height="3.8" fill="#f2f2f2"/>
<rect x="1000.05" y="814.3" width="1.25" height="2.2" fill="#f2f2f2"/>
<rect x="1000.05" y="816.5" width="1.25" height="6.6" fill="#008c00"/>
<rect x="1000.05" y="823.1" width="1.25" height="1.0" fill="#f2f2f2"/>
<rect x="1001.71" y="810.0" width="1.25" height="4.8" fill="#f2f2f2"/>
<rect x="1001.71" y="814.8" width="1.25" height="8.1" fill="#b40000"/>
<rect x="1001.71" y="822.9" width="1.25" height="7.7" fill="#f2f2f2"/>
<rect x="1003.38" y="815.6" width="1.25" height="3.3" fill="#f2f2f2"/>
<rect x="1003.38" y="819.0" width="1.25" height="6.7" fill="#b40000"/>
<rect x="1003.38" y="825.7" width="1.25" height="5.0" fill="#f2f2f2"/>
<rect x="1005.05" y="806.3" width="1.25" height="2.9" fill="#f2f2f2"/>
<rect x="1005.05" y="809.2" width="1.25" height="19.2" fill="#f2f2f2"/>
<rect x="1005.05" y="828.3" width="1.25" height="2.3" fill="#f2f2f2"/>
<rect x="1006.71" y="784.7" width="1.25" height="12.1" fill="#f2f2f2"/>
<rect x="1006.71" y="796.8" width="1.25" height="12.1" fill="#f2f2f2"/>
<rect x="1006.71" y="808.9" width="1.25" height="6.8" fill="#f2f2f2"/>
<rect x="1008.38" y="760.3" width="1.25" height="13.0" fill="#f2f2f2"/>
<rect x="1008.38" y="773.3" width="1.25" height="15.3" fill="#b40000"/>
<rect x="1008.38" y="788.6" width="1.25" height="6.4" fill="#f2f2f2"/>
<rect x="1203.32" y="711.4" width="1.25" height="12.5" fill="#f2f2f2"/>
<rect x="1203.32" y="723.9" width="1.25" height="18.5" fill="#f2f2f2"/>
<rect x="1203.32" y="742.4" width="1.25" height="15.9" fill="#f2f2f2"/>
<rect x="1204.99" y="718.8" width="1.25" height="32.4" fill="#f2f2f2"/>
<rect x="1204.99" y="751.1" width="1.25" height="20.0" fill="#b40000"/>
<rect x="1204.99" y="771.1" width="1.25" height="29.3" fill="#f2f2f2"/>
<rect x="1206.65" y="724.4" width="1.25" height="27.0" fill="#f2f2f2"/>
<rect x="1206.65" y="751.4" width="1.25" height="24.0" fill="#b40000"/>
<rect x="1206.65" y="775.5" width="1.25" height="14.6" fill="#f2f2f2"/>
<rect x="1208.32" y="748.8" width="1.25" height="3.3" fill="#f2f2f2"/>
<rect x="1208.32" y="752.1" width="1.25" height="18.0" fill="#b40000"/>
<rect x="1208.32" y="770.1" width="1.25" height="5.0" fill="#f2f2f2"/>
<rect x="1209.99" y="718.8" width="1.25" height="9.5" fill="#f2f2f2"/>
<rect x="1209.99" y="728.3" width="1.25" height="37.3" fill="#008c00"/>
<rect x="1209.99" y="765.6" width="1.25" height="4.8" fill="#f2f2f2"/>
<rect x="1211.65" y="700.0" width="1.25" height="14.8" fill="#f2f2f2"/>
<rect x="1211.65" y="714.8" width="1.25" height="16.2" fill="#b40000"/>
<rect x="1211.65" y="731.0" width="1.25" height="17.8" fill="#f2f2f2"/>
<rect x="1213.32" y="709.4" width="1.25" height="3.9" fill="#f2f2f2"/>
<rect x="1213.32" y="713.3" width="1.25" height="7.0" fill="#b40000"/>
<rect x="1213.32" y="720.3" width="1.25" height="5.0" fill="#f2f2f2"/>
<rect x="1214.99" y="670.1" width="1.25" height="10.3" fill="#f2f2f2"/>
<rect x="1214.99" y="680.4" width="1.25" height="17.0" fill="#b40000"/>
<rect x="1214.99" y="697.4" width="1.25" height="2.7" fill="#f2f2f2"/>
<rect x="1216.65" y="673.9" width="1.25" height="4.1" fill="#f2f2f2"/>
<rect x="1216.65" y="678.0" width="1.25" height="8.2" fill="#cfc8c8"/>
<rect x="1216.65" y="686.2" width="1.25" height="4.6" fill="#f2f2f2"/>
<rect x="1218.32" y="652.4" width="1.25" height="4.9" fill="#f2f2f2"/>
<rect x="1218.32" y="657.3" width="1.25" height="12.9" fill="#cfc8c8"/>
<rect x="1218.32" y="670.2" width="1.25" height="6.9" fill="#f2f2f2"/>
<rect x="1219.99" y="629.2" width="1.25" height="10.2" fill="#f2f2f2"/>
<rect x="1219.99" y="639.4" width="1.25" height="37.1" fill="#008c00"/>
<rect x="1219.99" y="676.6" width="1.25" height="2.9" fill="#f2f2f2"/>
<rect x="1221.65" y="639.1" width="1.25" height="10.2" fill="#f2f2f2"/>
<rect x="1221.65" y="649.3" width="1.25" height="29.7" fill="#cfc8c8"/>
<rect x="1221.65" y="679.0" width="1.25" height="6.1" fill="#f2f2f2"/>
<rect x="1223.32" y="664.5" width="1.25" height="4.9" fill="#f2f2f2"/>
<rect x="1223.32" y="669.3" width="1.25" height="7.0" fill="#cfc8c8"/>
<rect x="1223.32" y="676.3" width="1.25" height="3.2" fill="#f2f2f2"/>
<rect x="1224.99" y="664.5" width="1.25" height="6.5" fill="#f2f2f2"/>
<rect x="1224.99" y="671.0" width="1.25" height="20.9" fill="#b40000"/>
<rect x="1224.99" y="691.9" width="1.25" height="2.6" fill="#f2f2f2"/>
<rect x="1226.65" y="662.7" width="1.25" height="4.7" fill="#f2f2f2"/>
<rect x="1226.65" y="667.5" width="1.25" height="13.1" fill="#b40000"/>
<rect x="1226.65" y="680.5" width="1.25" height="5.3" fill="#f2f2f2"/>
<rect x="1228.32" y="649.5" width="1.25" height="12.3" fill="#f2f2f2"/>
<rect x="1228.32" y="661.7" width="1.25" height="29.2" fill="#b40000"/>
<rect x="1228.32" y="691.0" width="1.25" height="3.5" fill="#f2f2f2"/>
<rect x="1229.99" y="664.5" width="1.25" height="9.7" fill="#f2f2f2"/>
<rect x="1229.99" y="674.2" width="1.25" height="13.5" fill="#cfc8c8"/>
<rect x="1229.99" y="687.6" width="1.25" height="6.9" fill="#f2f2f2"/>
<rect x="1231.65" y="670.1" width="1.25" height="5.5" fill="#f2f2f2"/>
<rect x="1231.65" y="675.6" width="1.25" height="14.4" fill="#b40000"/>
<rect x="1231.65" y="690.1" width="1.25" height="4.4" fill="#f2f2f2"/>
<rect x="1233.32" y="674.8" width="1.25" height="7.5" fill="#f2f2f2"/>
<rect x="1233.32" y="682.4" width="1.25" height="5.6" fill="#f2f2f2"/>
<rect x="1233.32" y="688.0" width="1.25" height="5.8" fill="#f2f2f2"/>
<rect x="1234.99" y="679.5" width="1.25" height="1.9" fill="#f2f2f2"/>
<rect x="1234.99" y="681.4" width="1.25" height="7.8" fill="#f2f2f2"/>
<rect x="1234.99" y="689.2" width="1.25" height="6.3" fill="#f2f2f2"/>
<rect x="1236.65" y="685.1" width="1.25" height="11.6" fill="#f2f2f2"/>
<rect x="1236.65" y="696.7" width="1.25" height="7.3" fill="#008c00"/>
<rect x="1236.65" y="704.0" width="1.25" height="11.1" fill="#f2f2f2"/>
<rect x="1238.32" y="711.4" width="1.25" height="9.2" fill="#f2f2f2"/>
<rect x="1238.32" y="720.6" width="1.25" height="8.4" fill="#b40000"/>
<rect x="1238.32" y="729.0" width="1.25" height="10.6" fill="#f2f2f2"/>
<rect x="1239.99" y="733.8" width="1.25" height="3.7" fill="#f2f2f2"/>
<rect x="1239.99" y="737.5" width="1.25" height="11.1" fill="#b40000"/>
<rect x="1239.99" y="748.6" width="1.25" height="6.8" fill="#f2f2f2"/>
<rect x="1241.65" y="709.4" width="1.25" height="18.4" fill="#f2f2f2"/>
<rect x="1241.65" y="727.8" width="1.25" height="24.8" fill="#b40000"/>
<rect x="1241.65" y="752.7" width="1.25" height="7.4" fill="#f2f2f2"/>
<rect x="1243.32" y="728.1" width="1.25" height="10.6" fill="#f2f2f2"/>
<rect x="1243.32" y="738.7" width="1.25" height="14.4" fill="#008c00"/>
<rect x="1243.32" y="753.1" width="1.25" height="3.5" fill="#f2f2f2"/>
<rect x="1244.99" y="749.7" width="1.25" height="2.3" fill="#f2f2f2"/>
<rect x="1244.99" y="752.1" width="1.25" height="6.3" fill="#b40000"/>
<rect x="1244.99" y="758.4" width="1.25" height="1.7" fill="#f2f2f2"/>
<rect x="1246.65" y="755.4" width="1.25" height="1.7" fill="#f2f2f2"/>
<rect x="1246.65" y="757.1" width="1.25" height="11.7" fill="#b40000"/>
<rect x="1246.65" y="768.8" width="1.25" height="1.6" fill="#f2f2f2"/>
<rect x="1248.32" y="760.1" width="1.25" height="4.3" fill="#f2f2f2"/>
<rect x="1248.32" y="764.4" width="1.25" height="5.2" fill="#f2f2f2"/>
<rect x="1248.32" y="769.6" width="1.25" height="5.5" fill="#f2f2f2"/>
<rect x="1249.99" y="770.7" width="1.25" height="1.9" fill="#f2f2f2"/>
<rect x="1249.99" y="772.5" width="1.25" height="3.9" fill="#b40000"/>
<rect x="1249.99" y="776.5" width="1.25" height="2.2" fill="#f2f2f2"/>
<rect x="1251.65" y="775.1" width="1.25" height="3.7" fill="#f2f2f2"/>
<rect x="1251.65" y="778.8" width="1.25" height="4.1" fill="#008c00"/>
<rect x="1251.65" y="782.9" width="1.25" height="2.5" fill="#f2f2f2"/>
<rect x="1253.32" y="775.1" width="1.25" height="9.1" fill="#f2f2f2"/>
<rect x="1253.32" y="784.2" width="1.25" height="14.1" fill="#cfc8c8"/>
<rect x="1253.32" y="798.2" width="1.25" height="2.2" fill="#f2f2f2"/>
<rect x="1254.99" y="795.7" width="1.25" height="4.1" fill="#f2f2f2"/>
<rect x="1254.99" y="799.8" width="1.25" height="8.1" fill="#f2f2f2"/>
<rect x="1254.99" y="807.9" width="1.25" height="2.8" fill="#f2f2f2"/>
<rect x="1256.65" y="777.7" width="1.25" height="5.0" fill="#f2f2f2"/>
<rect x="1256.65" y="782.7" width="1.25" height="11.4" fill="#f2f2f2"/>
<rect x="1256.65" y="794.1" width="1.25" height="3.5" fill="#f2f2f2"/>
<rect x="1258.32" y="760.1" width="1.25" height="6.2" fill="#f2f2f2"/>
<rect x="1258.32" y="766.2" width="1.25" height="20.5" fill="#cfc8c8"/>
<rect x="1258.32" y="786.7" width="1.25" height="3.4" fill="#f2f2f2"/>
<rect x="1259.99" y="755.4" width="1.25" height="1.0" fill="#f2f2f2"/>
<rect x="1259.99" y="756.4" width="1.25" height="9.0" fill="#cfc8c8"/>
<rect x="1259.99" y="765.3" width="1.25" height="5.1" fill="#f2f2f2"/>
<rect x="1261.65" y="745.1" width="1.25" height="6.9" fill="#f2f2f2"/>
<rect x="1261.65" y="752.0" width="1.25" height="8.4" fill="#b40000"/>
<rect x="1261.65" y="760.4" width="1.25" height="10.0" fill="#f2f2f2"/>
<rect x="1263.32" y="755.4" width="1.25" height="5.6" fill="#f2f2f2"/>
<rect x="1263.32" y="760.9" width="1.25" height="11.0" fill="#cfc8c8"/>
<rect x="1263.32" y="771.9" width="1.25" height="3.1" fill="#f2f2f2"/>
<rect x="1264.99" y="765.2" width="1.25" height="2.4" fill="#f2f2f2"/>
<rect x="1264.99" y="767.6" width="1.25" height="4.9" fill="#b40000"/>
<rect x="1264.99" y="772.5" width="1.25" height="1.9" fill="#f2f2f2"/>
<rect x="1266.65" y="770.4" width="1.25" height="5.5" fill="#f2f2f2"/>
<rect x="1266.65" y="775.9" width="1.25" height="8.1" fill="#008c00"/>
<rect x="1266.65" y="784.0" width="1.25" height="1.4" fill="#f2f2f2"/>
<rect x="1268.32" y="770.4" width="1.25" height="4.2" fill="#f2f2f2"/>
<rect x="1268.32" y="774.6" width="1.25" height="10.0" fill="#b40000"/>
<rect x="1268.32" y="784.5" width="1.25" height="1.0" fill="#f2f2f2"/>
<rect x="1269.99" y="759.3" width="1.25" height="1.5" fill="#f2f2f2"/>
<rect x="1269.99" y="760.8" width="1.25" height="6.0" fill="#b40000"/>
<rect x="1269.99" y="766.8" width="1.25" height="1.1" fill="#f2f2f2"/>
<rect x="1271.66" y="749.7" width="1.25" height="4.1" fill="#f2f2f2"/>
<rect x="1271.66" y="753.8" width="1.25" height="9.9" fill="#cfc8c8"/>
<rect x="1271.66" y="763.8" width="1.25" height="1.9" fill="#f2f2f2"/>
<rect x="1273.32" y="749.7" width="1.25" height="6.7" fill="#f2f2f2"/>
<rect x="1273.32" y="756.4" width="1.25" height="21.3" fill="#cfc8c8"/>
<rect x="1273.32" y="777.7" width="1.25" height="3.0" fill="#f2f2f2"/>
<rect x="1274.99" y="779.8" width="1.25" height="4.7" fill="#f2f2f2"/>
<rect x="1274.99" y="784.5" width="1.25" height="26.5" fill="#f2f2f2"/>
<rect x="1274.99" y="811.0" width="1.25" height="3.6" fill="#f2f2f2"/>
<rect x="1276.66" y="805.1" width="1.25" height="4.1" fill="#f2f2f2"/>
<rect x="1276.66" y="809.2" width="1.25" height="5.6" fill="#b40000"/>
<rect x="1276.66" y="814.8" width="1.25" height="5.3" fill="#f2f2f2"/>
<rect x="1278.32" y="805.1" width="1.25" height="2.9" fill="#f2f2f2"/>
<rect x="1278.32" y="808.0" width="1.25" height="10.0" fill="#f2f2f2"/>
<rect x="1278.32" y="818.0" width="1.25" height="2.1" fill="#f2f2f2"/>
<rect x="1279.99" y="813.2" width="1.25" height="1.7" fill="#f2f2f2"/>
<rect x="1279.99" y="814.9" width="1.25" height="5.4" fill="#cfc8c8"/>
<rect x="1279.99" y="820.3" width="1.25" height="2.7" fill="#f2f2f2"/>
<rect x="1281.66" y="810.8" width="1.25" height="7.5" fill="#f2f2f2"/>
<rect x="1281.66" y="818.2" width="1.25" height="6.2" fill="#008c00"/>
<rect x="1281.66" y="824.4" width="1.25" height="6.0" fill="#f2f2f2"/>
<rect x="1283.32" y="810.8" width="1.25" height="7.2" fill="#f2f2f2"/>
<rect x="1283.32" y="818.0" width="1.25" height="11.2" fill="#b40000"/>
<rect x="1283.32" y="829.2" width="1.25" height="1.3" fill="#f2f2f2"/>
<rect x="1284.99" y="810.0" width="1.25" height="1.1" fill="#f2f2f2"/>
<rect x="1284.99" y="811.1" width="1.25" height="9.3" fill="#b40000"/>
<rect x="1284.99" y="820.4" width="1.25" height="5.0" fill="#f2f2f2"/>
<rect x="1286.66" y="805.1" width="1.25" height="5.0" fill="#f2f2f2"/>
<rect x="1286.66" y="810.1" width="1.25" height="7.8" fill="#b40000"/>
<rect x="1286.66" y="817.9" width="1.25" height="7.8" fill="#f2f2f2"/>
<rect x="1288.32" y="790.1" width="1.25" height="2.5" fill="#f2f2f2"/>
<rect x="1288.32" y="792.6" width="1.25" height="12.7" fill="#b40000"/>
<rect x="1288.32" y="805.3" width="1.25" height="5.4" fill="#f2f2f2"/>
<rect x="1289.99" y="795.7" width="1.25" height="4.1" fill="#f2f2f2"/>
<rect x="1289.99" y="799.9" width="1.25" height="5.9" fill="#008c00"/>
<rect x="1289.99" y="805.7" width="1.25" height="5.0" fill="#f2f2f2"/>
<rect x="1291.66" y="808.2" width="1.25" height="1.0" fill="#f2f2f2"/>
<rect x="1291.66" y="809.0" width="1.25" height="6.5" fill="#b40000"/>
<rect x="1291.66" y="815.4" width="1.25" height="4.1" fill="#f2f2f2"/>
<rect x="1293.32" y="810.8" width="1.25" height="5.9" fill="#f2f2f2"/>
<rect x="1293.32" y="816.7" width="1.25" height="12.8" fill="#f2f2f2"/>
<rect x="1293.32" y="829.4" width="1.25" height="1.0" fill="#f2f2f2"/>
<rect x="1294.99" y="800.4" width="1.25" height="6.1" fill="#f2f2f2"/>
<rect x="1294.99" y="806.6" width="1.25" height="9.4" fill="#f2f2f2"/>
<rect x="1294.99" y="815.9" width="1.25" height="4.2" fill="#f2f2f2"/>
<rect x="1296.66" y="795.7" width="1.25" height="3.1" fill="#f2f2f2"/>
<rect x="1296.66" y="798.9" width="1.25" height="10.0" fill="#cfc8c8"/>
<rect x="1296.66" y="808.8" width="1.25" height="1.9" fill="#f2f2f2"/>
<rect x="1298.32" y="800.4" width="1.25" height="2.0" fill="#f2f2f2"/>
<rect x="1298.32" y="802.4" width="1.25" height="12.1" fill="#b40000"/>
<rect x="1298.32" y="814.5" width="1.25" height="1.0" fill="#f2f2f2"/>
<rect x="1299.99" y="805.9" width="1.25" height="4.0" fill="#f2f2f2"/>
<rect x="1299.99" y="809.9" width="1.25" height="4.1" fill="#cfc8c8"/>
<rect x="1299.99" y="813.9" width="1.25" height="3.4" fill="#f2f2f2"/>
<rect x="1301.66" y="805.1" width="1.25" height="5.0" fill="#f2f2f2"/>
<rect x="1301.66" y="810.2" width="1.25" height="11.4" fill="#b40000"/>
<rect x="1301.66" y="821.6" width="1.25" height="4.2" fill="#f2f2f2"/>
<rect x="1303.32" y="815.4" width="1.25" height="4.6" fill="#f2f2f2"/>
<rect x="1303.32" y="820.0" width="1.25" height="12.3" fill="#f2f2f2"/>
<rect x="1303.32" y="832.3" width="1.25" height="2.8" fill="#f2f2f2"/>
<rect x="1304.99" y="820.1" width="1.25" height="8.0" fill="#f2f2f2"/>
<rect x="1304.99" y="828.2" width="1.25" height="10.0" fill="#cfc8c8"/>
<rect x="1304.99" y="838.2" width="1.25" height="2.6" fill="#f2f2f2"/>
<rect x="1306.66" y="820.2" width="1.25" height="2.2" fill="#f2f2f2"/>
<rect x="1306.66" y="822.4" width="1.25" height="9.4" fill="#b40000"/>
<rect x="1306.66" y="831.8" width="1.25" height="5.2" fill="#f2f2f2"/>
<rect x="1308.32" y="820.1" width="1.25" height="4.7" fill="#f2f2f2"/>
<rect x="1308.32" y="824.8" width="1.25" height="7.9" fill="#f2f2f2"/>
<rect x="1308.32" y="832.7" width="1.25" height="2.5" fill="#f2f2f2"/>
<rect x="1309.99" y="815.4" width="1.25" height="3.3" fill="#f2f2f2"/>
<rect x="1309.99" y="818.7" width="1.25" height="13.8" fill="#f2f2f2"/>
<rect x="1309.99" y="832.5" width="1.25" height="2.6" fill="#f2f2f2"/>
<rect x="1311.66" y="816.4" width="1.25" height="4.4" fill="#f2f2f2"/>
<rect x="1311.66" y="820.8" width="1.25" height="5.1" fill="#cfc8c8"/>
<rect x="1311.66" y="825.9" width="1.25" height="6.1" fill="#f2f2f2"/>
<rect x="1313.32" y="815.4" width="1.25" height="4.8" fill="#f2f2f2"/>
<rect x="1313.32" y="820.3" width="1.25" height="5.1" fill="#008c00"/>
<rect x="1313.32" y="825.4" width="1.25" height="4.1" fill="#f2f2f2"/>
<rect x="1314.99" y="820.1" width="1.25" height="6.1" fill="#f2f2f2"/>
<rect x="1314.99" y="826.2" width="1.25" height="14.8" fill="#f2f2f2"/>
<rect x="1314.99" y="841.1" width="1.25" height="9.1" fill="#f2f2f2"/>
<rect x="1316.66" y="829.2" width="1.25" height="4.7" fill="#f2f2f2"/>
<rect x="1316.66" y="833.9" width="1.25" height="11.5" fill="#b40000"/>
<rect x="1316.66" y="845.4" width="1.25" height="1.4" fill="#f2f2f2"/>
<rect x="1318.32" y="835.2" width="1.25" height="1.5" fill="#f2f2f2"/>
<rect x="1318.32" y="836.7" width="1.25" height="12.6" fill="#f2f2f2"/>
<rect x="1318.32" y="849.3" width="1.25" height="1.0" fill="#f2f2f2"/>
<rect x="1319.99" y="830.5" width="1.25" height="7.7" fill="#f2f2f2"/>
<rect x="1319.99" y="838.2" width="1.25" height="9.4" fill="#b40000"/>
<rect x="1319.99" y="847.6" width="1.25" height="3.5" fill="#f2f2f2"/>
<rect x="1321.66" y="815.4" width="1.25" height="1.5" fill="#f2f2f2"/>
<rect x="1321.66" y="817.0" width="1.25" height="22.2" fill="#b40000"/>
<rect x="1321.66" y="839.2" width="1.25" height="1.6" fill="#f2f2f2"/>
<rect x="1323.32" y="810.8" width="1.25" height="5.4" fill="#f2f2f2"/>
<rect x="1323.32" y="816.1" width="1.25" height="8.6" fill="#cfc8c8"/>
<rect x="1323.32" y="824.7" width="1.25" height="5.8" fill="#f2f2f2"/>
<rect x="1324.99" y="804.9" width="1.25" height="3.2" fill="#f2f2f2"/>
<rect x="1324.99" y="808.1" width="1.25" height="8.9" fill="#cfc8c8"/>
<rect x="1324.99" y="817.0" width="1.25" height="6.1" fill="#f2f2f2"/>
<rect x="1326.66" y="795.7" width="1.25" height="8.8" fill="#f2f2f2"/>
<rect x="1326.66" y="804.6" width="1.25" height="13.8" fill="#f2f2f2"/>
<rect x="1326.66" y="818.4" width="1.25" height="1.8" fill="#f2f2f2"/>
<rect x="1328.32" y="780.7" width="1.25" height="14.6" fill="#f2f2f2"/>
<rect x="1328.32" y="795.3" width="1.25" height="9.8" fill="#f2f2f2"/>
<rect x="1328.32" y="805.1" width="1.25" height="15.0" fill="#f2f2f2"/>
<rect x="1329.99" y="740.4" width="1.25" height="6.1" fill="#f2f2f2"/>
<rect x="1329.99" y="746.4" width="1.25" height="39.2" fill="#b40000"/>
<rect x="1329.99" y="785.7" width="1.25" height="4.4" fill="#f2f2f2"/>
<rect x="55.65" y="257.6" width="1.25" height="71.3" fill="#f0f0f0"/>
<rect x="239.25" y="172.2" width="1.25" height="85.4" fill="#14d214"/>
<rect x="249.95" y="227.6" width="1.25" height="101.4" fill="#c00000"/>
<rect x="251.26" y="276.4" width="1.25" height="15.0" fill="#f0f0f0"/>
<rect x="251.26" y="291.4" width="1.25" height="37.5" fill="#c00000"/>
<rect x="65.98" y="252.0" width="1.25" height="5.6" fill="#c00000"/>
<rect x="121.36" y="197.5" width="1.25" height="5.3" fill="#f0f0f0"/>
<rect x="177.30" y="232.3" width="1.25" height="14.1" fill="#c00000"/>
<rect x="184.24" y="226.6" width="1.25" height="5.6" fill="#c00000"/>
<rect x="184.24" y="241.7" width="1.25" height="4.7" fill="#c00000"/>
<rect x="211.46" y="241.7" width="1.25" height="5.1" fill="#00a000"/>
<rect x="219.54" y="246.7" width="1.25" height="9.9" fill="#c00000"/>
<rect x="411.09" y="377.6" width="1.25" height="6.6" fill="#f0f0f0"/>
<rect x="370.35" y="392.6" width="1.25" height="67.6" fill="#c00000"/>
<rect x="370.35" y="460.2" width="1.25" height="15.0" fill="#b0b0b0"/>
<rect x="511.25" y="454.1" width="1.25" height="4.7" fill="#f0f0f0"/>
<rect x="511.25" y="458.8" width="1.25" height="39.4" fill="#c00000"/>
<rect x="511.25" y="498.2" width="1.25" height="11.3" fill="#f0f0f0"/>
<rect x="531.15" y="448.4" width="1.25" height="19.7" fill="#f0f0f0"/>
<rect x="531.15" y="468.2" width="1.25" height="110.8" fill="#00a000"/>
<rect x="531.15" y="578.9" width="1.25" height="26.1" fill="#f0f0f0"/>
<rect x="513.31" y="533.9" width="1.25" height="19.7" fill="#00a000"/>
<rect x="513.31" y="553.6" width="1.25" height="6.6" fill="#f0f0f0"/>
<rect x="518.20" y="560.1" width="1.25" height="24.4" fill="#c00000"/>
<rect x="534.90" y="553.6" width="1.25" height="31.0" fill="#c00000"/>
<rect x="539.60" y="526.4" width="1.25" height="32.9" fill="#c00000"/>
<rect x="548.04" y="578.9" width="1.25" height="5.6" fill="#c00000"/>
<rect x="552.74" y="584.5" width="1.25" height="5.6" fill="#f0f0f0"/>
<rect x="549.92" y="599.6" width="1.25" height="9.4" fill="#c00000"/>
<rect x="531.16" y="595.0" width="1.25" height="9.4" fill="#f0f0f0"/>
<rect x="549.94" y="599.7" width="1.25" height="8.4" fill="#c00000"/>
<rect x="559.32" y="604.4" width="1.25" height="3.8" fill="#c00000"/>
<rect x="707.62" y="609.1" width="1.25" height="49.7" fill="#c00000"/>
<rect x="696.36" y="700.1" width="1.25" height="33.8" fill="#c00000"/>
<rect x="747.61" y="701.1" width="1.25" height="23.5" fill="#00a000"/>
<rect x="851.88" y="624.1" width="1.25" height="31.0" fill="#b0b0b0"/>
<rect x="851.88" y="655.1" width="1.25" height="13.1" fill="#c00000"/>
<rect x="851.88" y="668.2" width="1.25" height="46.9" fill="#b0b0b0"/>
<rect x="873.47" y="634.4" width="1.25" height="13.1" fill="#00a000"/>
<rect x="1011.07" y="709.5" width="1.25" height="16.9" fill="#f0f0f0"/>
<rect x="1013.33" y="674.8" width="1.25" height="10.3" fill="#f0f0f0"/>
<rect x="1013.33" y="685.1" width="1.25" height="39.4" fill="#00a000"/>
<rect x="1017.97" y="714.9" width="1.25" height="95.1" fill="#00a000"/>
<rect x="1018.72" y="714.9" width="1.25" height="95.1" fill="#00a000"/>
<rect x="1061.48" y="720.0" width="1.25" height="6.6" fill="#f0f0f0"/>
<rect x="1067.10" y="720.0" width="1.25" height="4.7" fill="#c00000"/>
<rect x="1064.59" y="718.0" width="1.25" height="6.6" fill="#00a000"/>
<rect x="1067.41" y="719.9" width="1.25" height="4.7" fill="#c00000"/>
<rect x="1081.49" y="715.2" width="1.25" height="5.6" fill="#f0f0f0"/>
<rect x="1060.84" y="719.9" width="1.25" height="6.6" fill="#f0f0f0"/>
<rect x="1171.60" y="690.2" width="1.25" height="24.0" fill="#00a000"/>
<rect x="1186.61" y="703.9" width="1.25" height="15.0" fill="#00a000"/>
<rect x="1184.74" y="709.5" width="1.25" height="6.6" fill="#f0f0f0"/>
<rect x="1195.44" y="689.8" width="1.25" height="4.7" fill="#f0f0f0"/>
<rect x="1197.31" y="689.8" width="1.25" height="4.7" fill="#f0f0f0"/>
<rect x="1009.35" y="720.0" width="1.25" height="40.3" fill="#00a000"/>
<rect x="1008.60" y="760.3" width="1.25" height="15.0" fill="#f0f0f0"/>
<rect x="1008.60" y="775.3" width="1.25" height="19.7" fill="#00a000"/>
<rect x="1199.75" y="589.0" width="1.25" height="71.7" fill="#b0b0b0"/>
<rect x="1199.75" y="660.7" width="1.25" height="88.2" fill="#c00000"/>
<rect x="1201.07" y="682.3" width="1.25" height="66.6" fill="#14d214"/>
<rect x="1202.19" y="660.7" width="1.25" height="35.7" fill="#c00000"/>
<rect x="1202.19" y="696.4" width="1.25" height="52.6" fill="#f0f0f0"/>
<rect x="1328.20" y="780.7" width="1.25" height="9.4" fill="#f0f0f0"/>
<rect x="1328.20" y="790.1" width="1.25" height="30.0" fill="#00a000"/>
<rect x="1330.08" y="740.4" width="1.25" height="4.7" fill="#f0f0f0"/>
<rect x="1330.08" y="745.1" width="1.25" height="45.1" fill="#00a000"/>
<rect x="1333.46" y="734.7" width="1.25" height="12.2" fill="#00a000"/>
<rect x="1341.34" y="775.1" width="1.25" height="10.3" fill="#c00000"/>
<rect x="1345.10" y="749.7" width="1.25" height="4.7" fill="#00a000"/>
<rect x="1431.45" y="700.1" width="1.25" height="15.0" fill="#f0f0f0"/>
<rect x="1431.45" y="715.1" width="1.25" height="4.4" fill="#c00000"/>
<rect x="1443.72" y="694.4" width="1.25" height="5.6" fill="#00a000"/>
<rect x="1483.14" y="715.1" width="1.25" height="4.4" fill="#c00000"/>
<rect x="1493.53" y="720.1" width="1.25" height="29.4" fill="#c00000"/>
<rect x="1500.04" y="725.1" width="1.25" height="9.4" fill="#00a000"/>
<rect x="385.00" y="458.5" width="1.25" height="2.5" fill="#e8e000"/>
<rect x="387.50" y="459" width="1.2" height="1.1" fill="#7c7c9c"/>
<rect x="390.00" y="459" width="1.2" height="1.1" fill="#7c7c9c"/>
<rect x="392.50" y="459" width="1.2" height="1.1" fill="#c4c4c4"/>
<rect x="395.00" y="459" width="1.2" height="1.1" fill="#888888"/>
<rect x="397.50" y="459" width="1.2" height="1.1" fill="#7c7c9c"/>
<rect x="400.00" y="459" width="1.2" height="1.1" fill="#9c9c9c"/>
<rect x="402.50" y="459" width="1.2" height="1.1" fill="#7c7c9c"/>
<rect x="405.00" y="459" width="1.2" height="1.1" fill="#9c9c9c"/>
<rect x="407.50" y="459" width="1.2" height="1.1" fill="#c4c4c4"/>
<rect x="410.00" y="459" width="1.2" height="1.1" fill="#c4c4c4"/>
<rect x="437.00" y="463.5" width="1.25" height="2.5" fill="#e8e000"/>
<rect x="439.50" y="464" width="1.2" height="1.1" fill="#c4c4c4"/>
<rect x="442.00" y="464" width="1.2" height="1.1" fill="#888888"/>
<rect x="444.50" y="464" width="1.2" height="1.1" fill="#c4c4c4"/>
<rect x="447.00" y="483.5" width="1.25" height="2.5" fill="#e8e000"/>
<rect x="81.00" y="237.5" width="1.25" height="2.5" fill="#e8e000"/>
<rect x="83.50" y="238" width="1.2" height="1.1" fill="#7c7c9c"/>
<rect x="86.00" y="238" width="1.2" height="1.1" fill="#c4c4c4"/>
<rect x="88.50" y="238" width="1.2" height="1.1" fill="#c4c4c4"/>
<rect x="91.00" y="238" width="1.2" height="1.1" fill="#c4c4c4"/>
<rect x="93.50" y="238" width="1.2" height="1.1" fill="#7c7c9c"/>
<rect x="96.00" y="238" width="1.2" height="1.1" fill="#c4c4c4"/>
<rect x="98.50" y="238" width="1.2" height="1.1" fill="#c4c4c4"/>
<rect x="101.00" y="238" width="1.2" height="1.1" fill="#adadad"/>
<rect x="103.50" y="238" width="1.2" height="1.1" fill="#adadad"/>
<rect x="106.00" y="238" width="1.2" height="1.1" fill="#888888"/>
<rect x="108.50" y="238" width="1.2" height="1.1" fill="#c4c4c4"/>
<rect x="111.00" y="238" width="1.2" height="1.1" fill="#adadad"/>
<rect x="113.50" y="238" width="1.2" height="1.1" fill="#7c7c9c"/>
<rect x="116.00" y="238" width="1.2" height="1.1" fill="#888888"/>
<rect x="51.00" y="252.5" width="1.25" height="2.5" fill="#e8e000"/>
<rect x="53.50" y="253" width="1.2" height="1.1" fill="#7c7c9c"/>
<rect x="56.00" y="253" width="1.2" height="1.1" fill="#888888"/>
<rect x="58.50" y="253" width="1.2" height="1.1" fill="#adadad"/>
<rect x="70.00" y="258" width="1.2" height="1.1" fill="#7c7c9c"/>
<rect x="72.50" y="258" width="1.2" height="1.1" fill="#c4c4c4"/>
<rect x="75.00" y="258" width="1.2" height="1.1" fill="#888888"/>
<rect x="77.50" y="258" width="1.2" height="1.1" fill="#7c7c9c"/>
<rect x="80.00" y="258" width="1.2" height="1.1" fill="#adadad"/>
<rect x="122.00" y="197.5" width="1.25" height="2.5" fill="#e8e000"/>
<rect x="124.50" y="198" width="1.2" height="1.1" fill="#adadad"/>
<rect x="127.00" y="198" width="1.2" height="1.1" fill="#9c9c9c"/>
<rect x="129.50" y="198" width="1.2" height="1.1" fill="#7c7c9c"/>
<rect x="117.00" y="207.5" width="1.25" height="2.5" fill="#e8e000"/>
<rect x="119.50" y="208" width="1.2" height="1.1" fill="#adadad"/>
<rect x="164.00" y="222.5" width="1.25" height="2.5" fill="#e8e000"/>
<rect x="166.50" y="223" width="1.2" height="1.1" fill="#c4c4c4"/>
<rect x="169.00" y="223" width="1.2" height="1.1" fill="#9c9c9c"/>
<rect x="171.50" y="223" width="1.2" height="1.1" fill="#888888"/>
<rect x="174.00" y="223" width="1.2" height="1.1" fill="#7c7c9c"/>
<rect x="188.00" y="233" width="1.2" height="1.1" fill="#adadad"/>
<rect x="190.50" y="233" width="1.2" height="1.1" fill="#9c9c9c"/>
<rect x="193.00" y="233" width="1.2" height="1.1" fill="#c4c4c4"/>
<rect x="195.50" y="233" width="1.2" height="1.1" fill="#7c7c9c"/>
<rect x="198.00" y="233" width="1.2" height="1.1" fill="#7c7c9c"/>
<rect x="200.50" y="233" width="1.2" height="1.1" fill="#c4c4c4"/>
<rect x="203.00" y="233" width="1.2" height="1.1" fill="#888888"/>
<rect x="205.50" y="233" width="1.2" height="1.1" fill="#7c7c9c"/>
<rect x="208.00" y="233" width="1.2" height="1.1" fill="#888888"/>
<rect x="179.00" y="248" width="1.2" height="1.1" fill="#9c9c9c"/>
<rect x="181.50" y="248" width="1.2" height="1.1" fill="#888888"/>
<rect x="184.00" y="248" width="1.2" height="1.1" fill="#adadad"/>
<rect x="213.00" y="243" width="1.2" height="1.1" fill="#c4c4c4"/>
<rect x="215.50" y="243" width="1.2" height="1.1" fill="#adadad"/>
<rect x="218.00" y="243" width="1.2" height="1.1" fill="#c4c4c4"/>
<rect x="224.00" y="252.5" width="1.25" height="2.5" fill="#e8e000"/>
<rect x="226.50" y="253" width="1.2" height="1.1" fill="#adadad"/>
<rect x="229.00" y="253" width="1.2" height="1.1" fill="#9c9c9c"/>
<rect x="229.00" y="257.5" width="1.25" height="2.5" fill="#e8e000"/>
<rect x="231.50" y="258" width="1.2" height="1.1" fill="#c4c4c4"/>
<rect x="234.00" y="258" width="1.2" height="1.1" fill="#9c9c9c"/>
<rect x="236.50" y="258" width="1.2" height="1.1" fill="#9c9c9c"/>
<rect x="221.00" y="258" width="1.2" height="1.1" fill="#888888"/>
<rect x="223.50" y="258" width="1.2" height="1.1" fill="#9c9c9c"/>
<rect x="411.00" y="383.5" width="1.25" height="2.5" fill="#e8e000"/>
<rect x="413.50" y="384" width="1.2" height="1.1" fill="#7c7c9c"/>
<rect x="416.00" y="384" width="1.2" height="1.1" fill="#7c7c9c"/>
<rect x="418.50" y="384" width="1.2" height="1.1" fill="#888888"/>
<rect x="421.00" y="384" width="1.2" height="1.1" fill="#adadad"/>
<rect x="423.50" y="384" width="1.2" height="1.1" fill="#7c7c9c"/>
<rect x="426.00" y="384" width="1.2" height="1.1" fill="#c4c4c4"/>
<rect x="428.50" y="384" width="1.2" height="1.1" fill="#c4c4c4"/>
<rect x="431.00" y="384" width="1.2" height="1.1" fill="#7c7c9c"/>
<rect x="433.50" y="384" width="1.2" height="1.1" fill="#888888"/>
<rect x="436.00" y="384" width="1.2" height="1.1" fill="#888888"/>
<rect x="394.00" y="413.5" width="1.25" height="2.5" fill="#e8e000"/>
<rect x="396.50" y="414" width="1.2" height="1.1" fill="#7c7c9c"/>
<rect x="399.00" y="414" width="1.2" height="1.1" fill="#888888"/>
<rect x="376.00" y="438.5" width="1.25" height="2.5" fill="#e8e000"/>
<rect x="378.50" y="439" width="1.2" height="1.1" fill="#7c7c9c"/>
<rect x="381.00" y="439" width="1.2" height="1.1" fill="#c4c4c4"/>
<rect x="383.50" y="439" width="1.2" height="1.1" fill="#9c9c9c"/>
<rect x="386.00" y="439" width="1.2" height="1.1" fill="#c4c4c4"/>
<rect x="489.00" y="433.5" width="1.25" height="2.5" fill="#e8e000"/>
<rect x="491.50" y="434" width="1.2" height="1.1" fill="#c4c4c4"/>
<rect x="494.00" y="434" width="1.2" height="1.1" fill="#888888"/>
<rect x="496.50" y="434" width="1.2" height="1.1" fill="#adadad"/>
<rect x="489.00" y="433.5" width="1.25" height="2.5" fill="#e8e000"/>
<rect x="491.50" y="434" width="1.2" height="1.1" fill="#adadad"/>
<rect x="494.00" y="434" width="1.2" height="1.1" fill="#9c9c9c"/>
<rect x="496.50" y="434" width="1.2" height="1.1" fill="#888888"/>
<rect x="499.00" y="453.5" width="1.25" height="2.5" fill="#e8e000"/>
<rect x="501.50" y="454" width="1.2" height="1.1" fill="#9c9c9c"/>
<rect x="504.00" y="454" width="1.2" height="1.1" fill="#888888"/>
<rect x="506.50" y="454" width="1.2" height="1.1" fill="#9c9c9c"/>
<rect x="500.00" y="453.5" width="1.25" height="2.5" fill="#e8e000"/>
<rect x="502.50" y="454" width="1.2" height="1.1" fill="#adadad"/>
<rect x="505.00" y="454" width="1.2" height="1.1" fill="#adadad"/>
<rect x="507.50" y="454" width="1.2" height="1.1" fill="#adadad"/>
<rect x="515.00" y="534.5" width="1.25" height="2.5" fill="#e8e000"/>
<rect x="527.00" y="544.5" width="1.25" height="2.5" fill="#e8e000"/>
<rect x="529.50" y="545" width="1.2" height="1.1" fill="#7c7c9c"/>
<rect x="520.00" y="559.5" width="1.25" height="2.5" fill="#e8e000"/>
<rect x="522.50" y="560" width="1.2" height="1.1" fill="#c4c4c4"/>
<rect x="525.00" y="560" width="1.2" height="1.1" fill="#adadad"/>
<rect x="555.00" y="559.5" width="1.25" height="2.5" fill="#e8e000"/>
<rect x="557.50" y="560" width="1.2" height="1.1" fill="#c4c4c4"/>
<rect x="544.00" y="584.5" width="1.25" height="2.5" fill="#e8e000"/>
<rect x="546.50" y="585" width="1.2" height="1.1" fill="#adadad"/>
<rect x="715.00" y="634.5" width="1.25" height="2.5" fill="#e8e000"/>
<rect x="717.50" y="635" width="1.2" height="1.1" fill="#9c9c9c"/>
<rect x="720.00" y="635" width="1.2" height="1.1" fill="#888888"/>
<rect x="722.50" y="635" width="1.2" height="1.1" fill="#adadad"/>
<rect x="725.00" y="635" width="1.2" height="1.1" fill="#c4c4c4"/>
<rect x="727.50" y="635" width="1.2" height="1.1" fill="#9c9c9c"/>
<rect x="730.00" y="635" width="1.2" height="1.1" fill="#888888"/>
<rect x="713.00" y="664.5" width="1.25" height="2.5" fill="#e8e000"/>
<rect x="715.50" y="665" width="1.2" height="1.1" fill="#888888"/>
<rect x="711.00" y="679.5" width="1.25" height="2.5" fill="#e8e000"/>
<rect x="730.00" y="700.5" width="1.25" height="2.5" fill="#e8e000"/>
<rect x="732.50" y="701" width="1.2" height="1.1" fill="#c4c4c4"/>
<rect x="735.00" y="701" width="1.2" height="1.1" fill="#adadad"/>
<rect x="737.50" y="701" width="1.2" height="1.1" fill="#9c9c9c"/>
<rect x="740.00" y="701" width="1.2" height="1.1" fill="#9c9c9c"/>
<rect x="742.50" y="701" width="1.2" height="1.1" fill="#c4c4c4"/>
<rect x="745.00" y="701" width="1.2" height="1.1" fill="#888888"/>
<rect x="747.50" y="701" width="1.2" height="1.1" fill="#9c9c9c"/>
<rect x="750.00" y="701" width="1.2" height="1.1" fill="#adadad"/>
<rect x="752.50" y="701" width="1.2" height="1.1" fill="#9c9c9c"/>
<rect x="755.00" y="701" width="1.2" height="1.1" fill="#c4c4c4"/>
<rect x="757.50" y="701" width="1.2" height="1.1" fill="#c4c4c4"/>
<rect x="760.00" y="701" width="1.2" height="1.1" fill="#adadad"/>
<rect x="763.00" y="719.5" width="1.25" height="2.5" fill="#e8e000"/>
<rect x="765.50" y="720" width="1.2" height="1.1" fill="#9c9c9c"/>
<rect x="768.00" y="720" width="1.2" height="1.1" fill="#9c9c9c"/>
<rect x="698.00" y="735" width="1.2" height="1.1" fill="#9c9c9c"/>
<rect x="700.50" y="735" width="1.2" height="1.1" fill="#c4c4c4"/>
<rect x="703.00" y="735" width="1.2" height="1.1" fill="#adadad"/>
<rect x="705.50" y="735" width="1.2" height="1.1" fill="#adadad"/>
<rect x="552.00" y="604.5" width="1.25" height="2.5" fill="#e8e000"/>
<rect x="861.00" y="644.5" width="1.25" height="2.5" fill="#e8e000"/>
<rect x="863.50" y="645" width="1.2" height="1.1" fill="#c4c4c4"/>
<rect x="866.00" y="645" width="1.2" height="1.1" fill="#9c9c9c"/>
<rect x="868.50" y="645" width="1.2" height="1.1" fill="#9c9c9c"/>
<rect x="871.00" y="645" width="1.2" height="1.1" fill="#c4c4c4"/>
<rect x="852.00" y="671" width="1.2" height="1.1" fill="#9c9c9c"/>
<rect x="854.50" y="671" width="1.2" height="1.1" fill="#c4c4c4"/>
<rect x="857.00" y="671" width="1.2" height="1.1" fill="#7c7c9c"/>
<rect x="859.50" y="671" width="1.2" height="1.1" fill="#9c9c9c"/>
<rect x="820.00" y="695" width="1.2" height="1.1" fill="#7c7c9c"/>
<rect x="822.50" y="695" width="1.2" height="1.1" fill="#9c9c9c"/>
<rect x="825.00" y="695" width="1.2" height="1.1" fill="#888888"/>
<rect x="827.50" y="695" width="1.2" height="1.1" fill="#9c9c9c"/>
<rect x="830.00" y="695" width="1.2" height="1.1" fill="#9c9c9c"/>
<rect x="832.50" y="695" width="1.2" height="1.1" fill="#c4c4c4"/>
<rect x="835.00" y="695" width="1.2" height="1.1" fill="#c4c4c4"/>
<rect x="837.50" y="695" width="1.2" height="1.1" fill="#888888"/>
<rect x="840.00" y="695" width="1.2" height="1.1" fill="#c4c4c4"/>
<rect x="842.50" y="695" width="1.2" height="1.1" fill="#9c9c9c"/>
<rect x="845.00" y="695" width="1.2" height="1.1" fill="#7c7c9c"/>
<rect x="847.50" y="695" width="1.2" height="1.1" fill="#7c7c9c"/>
<rect x="875.00" y="635" width="1.2" height="1.1" fill="#c4c4c4"/>
<rect x="877.50" y="635" width="1.2" height="1.1" fill="#9c9c9c"/>
<rect x="1015.00" y="685.5" width="1.25" height="2.5" fill="#e8e000"/>
<rect x="1038.00" y="725.5" width="1.25" height="2.5" fill="#e8e000"/>
<rect x="1040.50" y="726" width="1.2" height="1.1" fill="#888888"/>
<rect x="1043.00" y="726" width="1.2" height="1.1" fill="#888888"/>
<rect x="1045.50" y="726" width="1.2" height="1.1" fill="#7c7c9c"/>
<rect x="1048.00" y="726" width="1.2" height="1.1" fill="#7c7c9c"/>
<rect x="1050.50" y="726" width="1.2" height="1.1" fill="#888888"/>
<rect x="1053.00" y="726" width="1.2" height="1.1" fill="#888888"/>
<rect x="1055.50" y="726" width="1.2" height="1.1" fill="#9c9c9c"/>
<rect x="1058.00" y="719.5" width="1.25" height="2.5" fill="#e8e000"/>
<rect x="1038.00" y="725.5" width="1.25" height="2.5" fill="#e8e000"/>
<rect x="1040.50" y="726" width="1.2" height="1.1" fill="#adadad"/>
<rect x="1043.00" y="726" width="1.2" height="1.1" fill="#c4c4c4"/>
<rect x="1045.50" y="726" width="1.2" height="1.1" fill="#888888"/>
<rect x="1048.00" y="726" width="1.2" height="1.1" fill="#7c7c9c"/>
<rect x="1050.50" y="726" width="1.2" height="1.1" fill="#9c9c9c"/>
<rect x="1053.00" y="726" width="1.2" height="1.1" fill="#c4c4c4"/>
<rect x="1055.50" y="726" width="1.2" height="1.1" fill="#adadad"/>
<rect x="1066.00" y="726" width="1.2" height="1.1" fill="#888888"/>
<rect x="1068.50" y="726" width="1.2" height="1.1" fill="#7c7c9c"/>
<rect x="1071.00" y="726" width="1.2" height="1.1" fill="#9c9c9c"/>
<rect x="1073.50" y="726" width="1.2" height="1.1" fill="#888888"/>
<rect x="1076.00" y="726" width="1.2" height="1.1" fill="#adadad"/>
<rect x="1078.50" y="726" width="1.2" height="1.1" fill="#adadad"/>
<rect x="1081.00" y="726" width="1.2" height="1.1" fill="#888888"/>
<rect x="1086.00" y="725.5" width="1.25" height="2.5" fill="#e8e000"/>
<rect x="1088.50" y="726" width="1.2" height="1.1" fill="#9c9c9c"/>
<rect x="1023.00" y="760.5" width="1.25" height="2.5" fill="#e8e000"/>
<rect x="1025.50" y="761" width="1.2" height="1.1" fill="#adadad"/>
<rect x="1028.00" y="761" width="1.2" height="1.1" fill="#9c9c9c"/>
<rect x="1030.50" y="761" width="1.2" height="1.1" fill="#9c9c9c"/>
<rect x="1033.00" y="761" width="1.2" height="1.1" fill="#7c7c9c"/>
<rect x="1035.50" y="761" width="1.2" height="1.1" fill="#888888"/>
<rect x="1069.00" y="726" width="1.2" height="1.1" fill="#888888"/>
<rect x="1071.50" y="726" width="1.2" height="1.1" fill="#c4c4c4"/>
<rect x="1074.00" y="726" width="1.2" height="1.1" fill="#c4c4c4"/>
<rect x="1076.50" y="726" width="1.2" height="1.1" fill="#7c7c9c"/>
<rect x="1079.00" y="726" width="1.2" height="1.1" fill="#888888"/>
<rect x="1088.00" y="725.5" width="1.25" height="2.5" fill="#e8e000"/>
<rect x="1173.00" y="695" width="1.2" height="1.1" fill="#9c9c9c"/>
<rect x="1175.50" y="695" width="1.2" height="1.1" fill="#888888"/>
<rect x="1178.00" y="695" width="1.2" height="1.1" fill="#9c9c9c"/>
<rect x="1180.50" y="695" width="1.2" height="1.1" fill="#c4c4c4"/>
<rect x="1183.00" y="695" width="1.2" height="1.1" fill="#888888"/>
<rect x="1188.00" y="716" width="1.2" height="1.1" fill="#888888"/>
<rect x="1190.50" y="716" width="1.2" height="1.1" fill="#888888"/>
<rect x="1193.00" y="716" width="1.2" height="1.1" fill="#7c7c9c"/>
<rect x="1143.00" y="690.5" width="1.25" height="2.5" fill="#e8e000"/>
<rect x="1145.50" y="691" width="1.2" height="1.1" fill="#adadad"/>
<rect x="1148.00" y="691" width="1.2" height="1.1" fill="#888888"/>
<rect x="1150.50" y="691" width="1.2" height="1.1" fill="#adadad"/>
<rect x="1153.00" y="691" width="1.2" height="1.1" fill="#9c9c9c"/>
<rect x="1155.50" y="691" width="1.2" height="1.1" fill="#c4c4c4"/>
<rect x="1158.00" y="691" width="1.2" height="1.1" fill="#7c7c9c"/>
<rect x="1160.50" y="691" width="1.2" height="1.1" fill="#888888"/>
<rect x="1163.00" y="691" width="1.2" height="1.1" fill="#888888"/>
<rect x="1165.50" y="691" width="1.2" height="1.1" fill="#7c7c9c"/>
<rect x="1168.00" y="691" width="1.2" height="1.1" fill="#7c7c9c"/>
<rect x="1170.50" y="691" width="1.2" height="1.1" fill="#c4c4c4"/>
<rect x="1337.00" y="745.5" width="1.25" height="2.5" fill="#e8e000"/>
<rect x="1339.50" y="746" width="1.2" height="1.1" fill="#adadad"/>
<rect x="1355.00" y="745.5" width="1.25" height="2.5" fill="#e8e000"/>
<rect x="1357.50" y="746" width="1.2" height="1.1" fill="#9c9c9c"/>
<rect x="1360.00" y="746" width="1.2" height="1.1" fill="#9c9c9c"/>
<rect x="1362.50" y="746" width="1.2" height="1.1" fill="#9c9c9c"/>
<rect x="1365.00" y="746" width="1.2" height="1.1" fill="#adadad"/>
<rect x="1367.50" y="746" width="1.2" height="1.1" fill="#c4c4c4"/>
<rect x="1370.00" y="746" width="1.2" height="1.1" fill="#7c7c9c"/>
<rect x="1372.50" y="746" width="1.2" height="1.1" fill="#adadad"/>
<rect x="1375.00" y="746" width="1.2" height="1.1" fill="#888888"/>
<rect x="1377.50" y="746" width="1.2" height="1.1" fill="#adadad"/>
<rect x="1380.00" y="746" width="1.2" height="1.1" fill="#9c9c9c"/>
<rect x="1382.50" y="746" width="1.2" height="1.1" fill="#888888"/>
<rect x="1385.00" y="746" width="1.2" height="1.1" fill="#adadad"/>
<rect x="1388.00" y="749.5" width="1.25" height="2.5" fill="#e8e000"/>
<rect x="1390.50" y="750" width="1.2" height="1.1" fill="#7c7c9c"/>
<rect x="1393.00" y="750" width="1.2" height="1.1" fill="#c4c4c4"/>
<rect x="1395.50" y="750" width="1.2" height="1.1" fill="#adadad"/>
<rect x="1398.00" y="750" width="1.2" height="1.1" fill="#c4c4c4"/>
<rect x="1400.00" y="805.5" width="1.25" height="2.5" fill="#e8e000"/>
<rect x="1402.50" y="806" width="1.2" height="1.1" fill="#888888"/>
<rect x="1405.00" y="806" width="1.2" height="1.1" fill="#888888"/>
<rect x="1408.00" y="734.5" width="1.25" height="2.5" fill="#e8e000"/>
<rect x="1334.00" y="730.5" width="1.25" height="2.5" fill="#e8e000"/>
<rect x="1185.00" y="716" width="1.2" height="1.1" fill="#9c9c9c"/>
<rect x="1187.50" y="716" width="1.2" height="1.1" fill="#9c9c9c"/>
<rect x="1190.00" y="716" width="1.2" height="1.1" fill="#888888"/>
<rect x="1192.50" y="716" width="1.2" height="1.1" fill="#adadad"/>
<rect x="1429.00" y="700.5" width="1.25" height="2.5" fill="#e8e000"/>
<rect x="1412.00" y="710.5" width="1.25" height="2.5" fill="#e8e000"/>
<rect x="1414.50" y="711" width="1.2" height="1.1" fill="#7c7c9c"/>
<rect x="1417.00" y="711" width="1.2" height="1.1" fill="#adadad"/>
<rect x="1419.50" y="711" width="1.2" height="1.1" fill="#c4c4c4"/>
<rect x="1422.00" y="711" width="1.2" height="1.1" fill="#7c7c9c"/>
<rect x="1424.50" y="711" width="1.2" height="1.1" fill="#c4c4c4"/>
<rect x="1427.00" y="711" width="1.2" height="1.1" fill="#c4c4c4"/>
<rect x="1433.00" y="720" width="1.2" height="1.1" fill="#888888"/>
<rect x="1435.50" y="720" width="1.2" height="1.1" fill="#888888"/>
<rect x="1438.00" y="720" width="1.2" height="1.1" fill="#7c7c9c"/>
<rect x="1440.50" y="720" width="1.2" height="1.1" fill="#7c7c9c"/>
<rect x="1443.00" y="720" width="1.2" height="1.1" fill="#7c7c9c"/>
<rect x="1445.00" y="695" width="1.2" height="1.1" fill="#888888"/>
<rect x="1447.50" y="695" width="1.2" height="1.1" fill="#888888"/>
<rect x="1450.00" y="695" width="1.2" height="1.1" fill="#c4c4c4"/>
<rect x="1452.50" y="695" width="1.2" height="1.1" fill="#adadad"/>
<rect x="1455.00" y="695" width="1.2" height="1.1" fill="#c4c4c4"/>
<rect x="1457.50" y="695" width="1.2" height="1.1" fill="#7c7c9c"/>
<rect x="1460.00" y="695" width="1.2" height="1.1" fill="#9c9c9c"/>
<rect x="1463.00" y="679.5" width="1.25" height="2.5" fill="#e8e000"/>
<rect x="1465.50" y="680" width="1.2" height="1.1" fill="#c4c4c4"/>
<rect x="1468.00" y="680" width="1.2" height="1.1" fill="#888888"/>
<rect x="1470.50" y="680" width="1.2" height="1.1" fill="#adadad"/>
<rect x="1471.00" y="700.5" width="1.25" height="2.5" fill="#e8e000"/>
<rect x="1473.50" y="701" width="1.2" height="1.1" fill="#9c9c9c"/>
<rect x="1476.00" y="701" width="1.2" height="1.1" fill="#888888"/>
<rect x="1478.50" y="701" width="1.2" height="1.1" fill="#888888"/>
<rect x="1481.00" y="701" width="1.2" height="1.1" fill="#9c9c9c"/>
<rect x="1484.00" y="720" width="1.2" height="1.1" fill="#9c9c9c"/>
<rect x="1486.50" y="720" width="1.2" height="1.1" fill="#9c9c9c"/>
<rect x="1489.00" y="720" width="1.2" height="1.1" fill="#7c7c9c"/>
<rect x="1501.00" y="719.5" width="1.25" height="2.5" fill="#e8e000"/>
<rect x="1503.50" y="720" width="1.2" height="1.1" fill="#9c9c9c"/>
<rect x="1408.00" y="734.5" width="1.25" height="2.5" fill="#e8e000"/>
<rect x="1497.00" y="749.5" width="1.25" height="2.5" fill="#e8e000"/>
<rect x="1390.00" y="750" width="1.2" height="1.1" fill="#888888"/>
<rect x="1392.50" y="750" width="1.2" height="1.1" fill="#adadad"/>
<rect x="1395.00" y="750" width="1.2" height="1.1" fill="#9c9c9c"/>
<rect x="1397.50" y="750" width="1.2" height="1.1" fill="#9c9c9c"/>
<rect x="1400.00" y="750" width="1.2" height="1.1" fill="#c4c4c4"/>
<rect x="1402.50" y="750" width="1.2" height="1.1" fill="#888888"/>
<rect x="1405.00" y="750" width="1.2" height="1.1" fill="#888888"/>
<rect x="1506.00" y="740.5" width="1.25" height="2.5" fill="#e8e000"/>
</g>
<g shape-rendering="geometricPrecision" fill="none" stroke-linejoin="round" stroke-linecap="round">
<path d="M14.0 357.0 L30.0 348.5 L45.5 340.0 L75.1 324.8 L84.5 319.6 L93.9 313.9 L103.2 308.3 L112.6 303.6 L122.0 298.9 L129.5 295.5 L161.4 294.8 L169.0 290.5 L176.5 285.8 L182.1 282.0 L187.7 278.3 L197.1 274.5 L206.5 270.4 L215.9 266.6 L225.3 263.6 L234.7 261.0 L242.2 258.6 L251.5 256.7 L262.8 255.2 L272.2 254.4 L279.7 253.3 L285.3 254.4 L292.8 255.2 L300.0 258.6 L337.0 280.0 L346.4 282.8 L355.8 285.6 L365.2 289.0 L374.6 293.1 L384.0 298.8 L393.4 304.4 L402.7 310.0 L412.1 314.7 L421.5 318.5 L430.9 323.2 L440.3 327.9 L449.3 332.6 L488.8 333.4 L494.4 336.6 L501.9 341.3 L509.5 346.0 L517.0 351.6 L524.5 361.0 L532.0 367.6 L539.5 375.1 L547.0 382.6 L554.5 389.7 L560.1 395.7 L565.8 404.2 L571.4 412.6 L578.9 422.0 L586.4 431.4 L593.9 439.9 L601.4 448.3 L609.0 457.7 L611.4 459.7 L620.8 471.0 L630.2 482.2 L639.6 493.5 L649.0 503.8 L658.3 514.2 L667.7 522.6 L677.1 530.1 L686.5 537.6 L695.9 545.1 L705.3 552.6 L714.7 560.1 L724.0 567.7 L733.4 575.2 L742.8 582.7 L752.2 590.2 L761.6 597.7 L769.1 604.3 L769.7 605.3 L770.3 605.3 L818.2 606.3 L823.8 611.9 L831.3 619.4 L838.8 626.9 L846.4 634.4 L853.9 640.1 L861.4 644.7 L868.9 649.4 L876.4 654.1 L883.9 658.8 L891.4 662.6 L898.9 666.3 L906.4 669.2 L913.9 672.0 L921.4 674.8 L929.0 678.5 L938.3 682.3 L947.7 685.1 L957.1 687.9 L966.5 691.3 L975.9 694.5 L985.3 698.2 L994.7 702.9 L1004.0 706.7 L1011.5 709.5 L1022.8 711.4 L1032.2 713.3 L1041.6 715.1 L1051.0 716.6 L1060.0 716.6 L1088.2 718.0 L1142.6 718.4 L1153.9 719.9 L1165.1 720.4 L1200.8 720.4 L1208.2 720.3 L1217.5 720.1 L1236.3 720.1 L1243.8 721.6 L1251.3 725.3 L1258.8 728.2 L1266.4 731.0 L1273.9 733.8 L1281.4 736.6 L1288.9 739.4 L1296.4 742.2 L1303.9 745.1 L1311.4 747.3 L1318.9 749.2 L1324.5 750.7 L1330.2 750.3 L1339.6 749.2 L1349.0 748.4 L1358.3 747.3 L1367.7 746.0 L1377.1 744.7 L1386.5 742.8 L1390.0 742.0 L1392.5 741.4 L1396.3 742.0 L1400.0 743.2 L1403.8 744.5 L1407.5 745.4 L1411.3 745.1 L1415.0 743.9 L1420.0 743.0 L1427.5 742.4 L1435.1 742.6 L1442.6 742.6 L1447.6 742.0 L1452.6 741.6 L1457.6 741.0 L1462.6 740.5 L1467.6 739.7 L1472.6 739.1 L1477.6 738.8 L1482.6 739.2 L1486.4 740.5 L1491.4 740.7 L1496.4 741.4 L1501.4 742.0 L1505.1 742.6 L1509.5 742.4" stroke="#84da84" stroke-width="1.15"/>
<path d="M13.5 273.9 L18.8 273.2 L24.4 270.8 L31.9 267.9 L39.4 266.6 L44.1 265.1 L46.9 261.4 L49.2 257.6 L129.5 257.6" stroke="#12d412" stroke-width="1.25"/>
<path d="M160.5 217.3 L164.3 218.2 L165.2 219.7 L175.5 219.7 L177.4 231.3 L183.0 232.3 L184.9 237.9 L201.8 237.5 L203.7 235.7 L215.9 236.0 L218.7 239.8 L232.8 241.1 L236.9 244.5 L239.3 235.1 L240.8 253.9 L242.2 242.6 L245.0 244.5 L247.8 246.4 L251.5 257.6 L255.3 266.1 L262.8 272.6 L268.4 277.3 L270.4 280.0 L275.1 282.8 L280.7 287.5 L286.4 294.1 L292.0 299.7 L297.6 304.4 L302.3 310.0 L307.0 316.6 L312.6 322.2 L313.6 329.7 L318.3 331.6 L321.1 337.3 L325.8 341.9 L331.4 344.8 L337.0 347.6 L342.7 349.5 L348.3 352.8 L353.9 354.2 L359.6 356.0 L364.3 357.9 L367.1 360.7 L369.0 370.1 L369.9 381.4 L370.8 404.8 L449.3 404.5" stroke="#12d412" stroke-width="1.25"/>
<path d="M488.8 433.7 L497.8 434.2 L499.7 443.6 L509.5 444.5 L510.6 457.7 L511.0 477.5 L511.9 494.4 L514.7 495.4 L517.5 505.7 L518.5 515.1 L522.2 520.7 L529.7 522.6 L532.6 528.2 L534.4 539.5 L543.8 540.4 L547.6 542.3 L551.3 547.0 L553.2 553.6 L557.9 554.5 L559.8 562.0 L560.2 603.3 L560.9 651.3 L562.2 666.3 L566.0 675.7 L570.7 685.1 L574.4 680.4 L581.9 672.0 L595.1 670.1 L606.4 666.9 L615.7 666.0 L625.1 669.2 L670.2 669.7 L675.8 671.0 L683.3 673.8 L689.0 678.5 L690.8 683.2 L769.7 683.2" stroke="#12d412" stroke-width="1.25"/>
<path d="M818.2 691.7 L849.2 691.7 L851.0 663.5 L870.8 661.6 L873.6 658.8 L877.3 658.8 L878.6 670.1 L880.1 707.6 L881.1 722.7 L882.0 715.1 L885.8 703.9 L889.5 694.5 L893.3 687.0 L898.9 683.2 L910.2 682.3 L915.8 685.1 L923.3 688.9 L929.0 692.6 L934.6 698.2 L940.2 703.9 L947.7 709.5 L955.2 715.1 L962.7 718.9 L970.2 722.7 L977.8 726.4 L985.3 732.0 L992.8 737.7 L1000.3 745.2 L1008.7 754.6 L1010.0 747.1 L1060.0 746.7 L1091.0 746.9" stroke="#12d412" stroke-width="1.25"/>
<path d="M1142.6 689.8 L1170.8 690.2 L1171.7 697.3 L1182.0 697.3 L1184.8 702.0 L1186.1 709.5 L1186.9 718.9" stroke="#12d412" stroke-width="1.25"/>
<path d="M1200.0 682.3 L1200.4 726.4 L1202.7 731.1 L1205.5 733.9 L1210.2 743.3 L1213.0 740.5 L1215.8 733.9 L1219.6 722.7 L1223.3 715.2 L1229.0 709.5 L1232.7 707.7 L1237.4 707.1 L1240.2 711.4 L1244.9 717.0 L1249.6 718.9 L1255.2 724.5 L1260.9 728.3 L1266.5 733.0 L1273.9 740.4 L1281.4 745.1 L1288.9 748.8 L1296.4 751.1 L1303.9 753.5 L1311.4 756.3 L1318.9 759.1 L1324.5 761.0 L1328.3 762.9 L1330.2 758.6 L1410.0 758.6" stroke="#12d412" stroke-width="1.25"/>
<path d="M1411.3 710.1 L1427.5 710.1 L1431.3 710.4 L1441.3 710.4 L1443.2 708.6 L1448.8 707.9 L1455.1 708.2 L1462.6 708.2 L1467.6 707.3 L1472.6 706.6 L1481.4 706.6 L1483.9 708.2 L1490.1 708.6 L1491.6 706.3 L1492.6 716.3 L1493.9 728.2 L1495.1 732.0 L1497.0 738.2 L1509.5 737.8" stroke="#12d412" stroke-width="1.25"/>
<path d="M13.5 260.4 L18.8 259.5 L26.3 260.4 L31.9 262.3 L37.5 264.2 L43.2 263.2 L48.8 261.4 L56.3 259.1 L63.8 257.6 L71.3 254.8 L78.8 252.0 L86.4 248.2 L93.9 244.5 L101.4 243.2 L108.9 244.5 L114.5 245.4 L118.3 244.1 L123.9 240.3 L129.5 237.9 L161.4 237.9 L165.2 236.0 L170.8 233.2 L176.5 231.3 L184.0 231.0 L189.6 229.5 L195.2 228.0 L202.7 227.2 L210.2 227.2 L217.8 227.6 L223.4 229.1 L229.0 230.4 L234.7 233.2 L240.3 236.0 L245.9 237.9 L250.6 240.7 L255.3 247.3 L260.9 251.0 L266.6 254.8 L272.2 259.5 L277.8 266.1 L283.5 273.6 L289.1 282.0 L291.0 287.5 L295.7 296.9 L301.4 308.2 L307.0 318.5 L312.6 330.7 L317.3 338.2 L322.0 349.5 L325.8 360.7 L331.4 372.0 L337.0 380.4 L342.7 387.0 L348.3 393.6 L353.9 398.3 L359.6 402.0 L365.2 405.8 L370.8 408.6 L376.5 411.4 L382.1 413.3 L387.7 415.2 L393.4 416.7 L399.0 415.5 L403.7 418.0 L408.4 419.9 L414.0 417.0 L419.6 413.7 L425.3 412.9 L430.9 412.3 L434.7 412.9 L438.4 415.2 L444.0 420.8 L449.3 425.5 L488.8 426.1 L490.7 425.4 L496.3 427.3 L503.8 428.4 L509.5 428.4 L513.2 431.4 L517.0 437.0 L520.7 443.6 L526.4 450.2 L532.0 453.9 L535.7 459.6 L536.3 462.5 L541.9 473.8 L547.6 486.9 L553.2 500.1 L560.7 515.1 L566.4 532.0 L572.0 545.1 L577.6 560.1 L583.2 577.0 L588.9 592.1 L590.4 595.0 L595.1 604.4 L600.7 611.0 L606.4 616.6 L612.0 623.2 L615.7 631.6 L621.4 641.9 L627.0 649.4 L632.6 655.1 L638.3 660.7 L643.9 664.5 L649.5 663.5 L653.3 661.1 L658.9 664.5 L664.5 666.3 L670.2 667.3 L675.8 670.1 L681.4 674.8 L689.0 679.5 L694.6 684.2 L700.2 687.9 L705.8 691.7 L711.5 690.7 L717.1 689.8 L722.7 687.0 L728.4 683.6 L734.0 683.6 L739.6 686.0 L745.3 687.9 L750.9 690.2 L769.7 691.1 L770.3 691.1 L818.2 692.1 L823.8 690.7 L829.5 687.9 L835.1 685.1 L840.7 686.4 L846.4 688.9 L852.0 692.6 L857.6 695.8 L863.2 693.9 L868.9 689.8 L874.5 686.0 L880.1 683.2 L885.8 681.7 L891.4 678.5 L897.0 674.8 L902.7 672.3 L910.2 671.6 L917.7 672.0 L925.2 673.8 L930.8 676.7 L936.5 682.3 L942.1 690.7 L947.7 700.1 L953.4 709.5 L959.0 717.0 L966.5 724.5 L972.1 733.0 L978.1 742.5 L983.8 751.9 L989.4 761.3 L995.0 769.7 L1000.6 777.2 L1005.3 781.9 L1009.1 783.8 L1013.8 781.9 L1019.4 779.1 L1025.0 777.2 L1030.6 775.3 L1036.3 773.1 L1041.9 770.6 L1047.5 767.8 L1053.1 765.0 L1058.8 761.3 L1064.4 755.6 L1070.0 749.1 L1075.6 743.4 L1081.3 735.9 L1086.9 729.4 L1090.6 726.6 L1142.6 725.5 L1153.9 724.2 L1159.5 720.8 L1165.1 715.2 L1170.8 711.4 L1176.4 708.6 L1182.0 706.7 L1187.7 705.4 L1193.3 704.3 L1198.9 703.3 L1204.5 704.8 L1208.3 706.7 L1213.9 706.1 L1219.6 703.0 L1225.2 700.1 L1230.8 699.2 L1236.5 699.6 L1242.1 702.0 L1247.7 707.7 L1253.4 714.2 L1260.9 720.8 L1266.5 725.5 L1275.7 732.9 L1281.4 739.4 L1287.0 745.1 L1292.6 749.7 L1298.3 756.3 L1303.9 765.7 L1309.5 777.0 L1315.2 786.4 L1320.8 795.7 L1324.5 800.4 L1328.3 802.3 L1333.9 800.4 L1339.6 797.6 L1345.2 796.7 L1350.8 796.1 L1356.5 794.8 L1362.1 790.1 L1367.7 785.4 L1373.4 780.7 L1379.0 776.0 L1384.6 772.3 L1390.2 767.6 L1395.0 763.3 L1400.0 758.9 L1405.0 756.4 L1408.8 753.2 L1412.5 751.4 L1417.5 748.9 L1422.5 746.4 L1427.5 743.2 L1432.6 741.4 L1437.6 740.1 L1442.6 737.6 L1447.6 734.5 L1452.6 732.0 L1457.6 728.6 L1462.6 725.7 L1465.1 723.8 L1470.1 720.7 L1475.1 717.6 L1480.1 714.4 L1482.6 713.2 L1485.1 710.1 L1488.9 705.7 L1491.4 703.8 L1493.9 703.8 L1497.6 706.3 L1502.6 707.3 L1507.6 708.6 L1509.5 708.6" stroke="#e4b26c" stroke-width="1.25"/>
<path d="M13.5 280.1 L18.8 274.5 L24.4 265.1 L30.0 253.9 L35.7 246.4 L41.3 240.7 L46.0 237.0 L49.2 236.0 L52.6 237.0 L56.3 239.8 L61.9 245.4 L67.6 250.1 L71.3 252.0 L75.1 251.0 L78.8 252.4 L83.5 253.9 L88.2 252.0 L93.9 248.2 L101.4 243.5 L108.9 239.8 L116.4 236.0 L122.0 229.5 L129.5 222.9 L161.4 221.9 L165.2 219.1 L169.0 217.3 L173.6 215.4 L178.3 215.4 L183.0 218.2 L187.7 222.9 L192.4 227.2 L197.1 230.4 L201.8 232.3 L206.5 234.2 L212.1 235.1 L217.8 236.0 L223.4 238.8 L229.0 241.7 L234.7 245.4 L238.4 247.9 L241.2 245.4 L245.9 244.5 L249.7 247.3 L252.5 255.7 L257.2 265.1 L262.8 270.8 L268.4 277.3 L269.5 280.0 L274.2 287.5 L278.8 300.6 L282.6 313.8 L285.4 320.4 L289.2 322.2 L292.0 326.9 L295.7 338.2 L299.5 351.3 L303.2 362.6 L307.0 373.9 L310.8 387.0 L314.5 398.3 L320.1 409.5 L325.8 418.9 L331.4 424.5 L336.1 426.4 L339.9 423.6 L344.5 418.0 L349.2 411.4 L353.0 407.7 L356.7 407.7 L360.5 402.0 L365.2 395.4 L369.9 392.6 L372.7 393.2 L377.4 399.2 L382.1 407.7 L387.7 420.8 L395.2 429.2 L399.0 431.1 L404.6 438.6 L409.3 443.3 L414.0 435.8 L419.6 425.5 L425.3 415.2 L430.0 408.6 L434.7 402.0 L437.5 401.1 L444.0 402.0 L446.9 407.7 L449.3 414.8 L488.8 417.9 L492.6 423.0 L496.3 429.5 L501.9 439.9 L507.6 450.2 L512.3 457.7 L513.8 460.6 L519.4 473.8 L525.1 490.7 L529.7 502.9 L534.4 513.2 L539.1 524.5 L542.9 537.6 L547.6 548.9 L551.3 554.5 L557.9 556.4 L560.7 563.9 L563.5 578.9 L566.4 595.8 L568.8 606.3 L572.6 619.4 L576.3 628.8 L581.9 639.1 L585.7 648.5 L589.5 656.9 L594.2 666.3 L598.8 659.8 L603.5 651.3 L607.3 646.6 L612.0 646.1 L617.6 649.4 L623.2 654.1 L628.9 657.9 L634.5 662.6 L640.1 667.3 L644.8 673.8 L649.5 680.4 L655.2 678.5 L660.8 676.7 L668.3 675.3 L672.1 678.5 L679.6 683.2 L687.1 687.0 L694.6 691.7 L698.3 700.1 L702.1 707.6 L705.8 713.3 L711.5 708.6 L717.1 699.2 L721.8 688.9 L726.5 679.5 L730.2 673.8 L735.9 668.2 L741.5 664.1 L747.1 670.1 L752.8 677.6 L758.4 688.9 L764.0 701.1 L769.7 703.9 L770.3 703.9 L820.1 703.9 L827.6 702.6 L835.1 701.6 L842.6 700.1 L848.2 696.4 L853.9 691.7 L859.5 687.0 L865.1 679.5 L870.8 670.1 L874.5 662.6 L878.3 658.8 L880.1 661.1 L883.9 658.8 L889.5 659.8 L895.2 655.4 L899.9 660.7 L904.5 665.4 L908.3 670.1 L912.1 675.7 L915.8 674.8 L921.4 679.5 L925.2 685.1 L929.0 692.6 L932.7 700.1 L936.5 707.6 L940.2 718.9 L943.4 731.3 L947.2 740.6 L951.9 750.9 L955.6 758.4 L961.3 765.9 L966.9 773.4 L972.5 778.1 L978.1 780.0 L983.8 784.7 L989.4 790.3 L995.0 796.9 L1000.6 803.4 L1005.3 807.2 L1008.1 805.3 L1011.9 795.0 L1015.6 781.9 L1019.4 771.6 L1025.0 763.1 L1030.6 754.7 L1036.3 744.4 L1040.0 735.0 L1042.8 732.8 L1046.6 733.1 L1049.4 736.9 L1053.1 739.3 L1056.9 738.8 L1060.6 734.1 L1066.3 727.5 L1071.9 722.8 L1081.3 721.5 L1090.6 720.9 L1142.6 719.9 L1148.2 714.2 L1153.9 709.5 L1159.5 704.8 L1165.1 699.2 L1170.8 693.6 L1176.4 690.8 L1182.0 690.8 L1187.7 693.6 L1193.3 697.9 L1198.9 698.6 L1202.7 703.9 L1206.4 711.4 L1210.0 717.8 L1213.8 717.8 L1217.5 715.0 L1221.3 710.3 L1225.1 705.6 L1230.7 701.9 L1236.3 700.0 L1241.9 700.9 L1247.6 705.6 L1251.3 715.0 L1255.1 724.4 L1258.8 733.8 L1262.6 745.1 L1266.4 754.4 L1270.1 762.9 L1273.9 769.5 L1277.6 777.0 L1282.3 783.5 L1286.1 787.3 L1289.8 788.2 L1293.6 792.0 L1297.3 795.7 L1301.1 801.4 L1304.8 807.9 L1308.6 814.5 L1313.3 818.3 L1318.9 822.0 L1323.6 823.9 L1327.4 823.0 L1331.1 817.3 L1335.8 808.9 L1339.6 797.6 L1343.3 790.1 L1347.1 780.7 L1350.8 770.4 L1354.6 761.9 L1358.3 754.4 L1362.1 749.7 L1367.7 749.2 L1373.4 749.7 L1377.1 746.9 L1382.7 745.4 L1388.4 745.6 L1390.0 745.1 L1395.0 746.4 L1398.8 748.2 L1401.9 753.9 L1404.4 758.9 L1406.9 761.4 L1410.0 760.1 L1413.2 756.4 L1416.9 753.2 L1420.0 750.1 L1423.8 746.4 L1427.5 741.4 L1430.1 737.0 L1433.2 735.1 L1435.1 730.1 L1437.6 722.6 L1440.1 716.3 L1442.6 711.9 L1445.1 709.7 L1448.8 708.8 L1452.6 706.9 L1457.6 705.1 L1462.6 702.6 L1466.3 698.8 L1470.1 695.0 L1473.9 692.5 L1477.6 691.3 L1481.4 692.3 L1485.1 694.4 L1488.9 697.5 L1492.6 700.1 L1496.4 706.3 L1500.1 712.6 L1503.9 717.6 L1507.6 721.3 L1509.5 722.2" stroke="#2c60e4" stroke-width="1.3"/>
</g>
<g shape-rendering="auto" text-rendering="geometricPrecision">
<text x="1515.6" y="867.6" font-family="DejaVu Sans, Liberation Sans, sans-serif" font-size="17.5" fill="#fff">32.00</text>
<text x="1515.6" y="817.3" font-family="DejaVu Sans, Liberation Sans, sans-serif" font-size="17.5" fill="#fff">32.10</text>
<text x="1515.6" y="767.0" font-family="DejaVu Sans, Liberation Sans, sans-serif" font-size="17.5" fill="#fff">32.20</text>
<text x="1515.6" y="716.7" font-family="DejaVu Sans, Liberation Sans, sans-serif" font-size="17.5" fill="#fff">32.30</text>
<text x="1515.6" y="666.4" font-family="DejaVu Sans, Liberation Sans, sans-serif" font-size="17.5" fill="#fff">32.40</text>
<text x="1515.6" y="616.1" font-family="DejaVu Sans, Liberation Sans, sans-serif" font-size="17.5" fill="#fff">32.50</text>
<text x="1515.6" y="565.8" font-family="DejaVu Sans, Liberation Sans, sans-serif" font-size="17.5" fill="#fff">32.60</text>
<text x="1515.6" y="515.5" font-family="DejaVu Sans, Liberation Sans, sans-serif" font-size="17.5" fill="#fff">32.70</text>
<text x="1515.6" y="465.2" font-family="DejaVu Sans, Liberation Sans, sans-serif" font-size="17.5" fill="#fff">32.80</text>
<text x="1515.6" y="414.9" font-family="DejaVu Sans, Liberation Sans, sans-serif" font-size="17.5" fill="#fff">32.90</text>
<text x="1515.6" y="364.6" font-family="DejaVu Sans, Liberation Sans, sans-serif" font-size="17.5" fill="#fff">33.00</text>
<text x="1515.6" y="314.3" font-family="DejaVu Sans, Liberation Sans, sans-serif" font-size="17.5" fill="#fff">33.10</text>
<text x="1515.6" y="264.0" font-family="DejaVu Sans, Liberation Sans, sans-serif" font-size="17.5" fill="#fff">33.20</text>
<text x="1515.6" y="213.7" font-family="DejaVu Sans, Liberation Sans, sans-serif" font-size="17.5" fill="#fff">33.30</text>
<text x="1515.6" y="163.4" font-family="DejaVu Sans, Liberation Sans, sans-serif" font-size="17.5" fill="#fff">33.40</text>
<path d="M1509.5 741 L1514 733.5 L1514 731 Q1514 729 1516 729 L1566 729 Q1568 729 1568 731 L1568 748 Q1568 750 1566 750 L1516 750 Q1514 750 1514 748 Z" fill="#d6cb3b"/>
<text x="1515.6" y="746.3" font-family="DejaVu Sans, Liberation Sans, sans-serif" font-size="17.5" fill="#000">32.24</text>
<text x="1318" y="620" textLength="190" lengthAdjust="spacing" font-family="Liberation Sans, sans-serif" font-size="15" fill="#b4b4b4">Alert: default price &gt;= 32.47</text>
<text x="742" y="735" font-family="Liberation Sans, sans-serif" font-size="15" fill="#c4c4c4">32.24</text>
</g>
</svg>
</body>
</html>
